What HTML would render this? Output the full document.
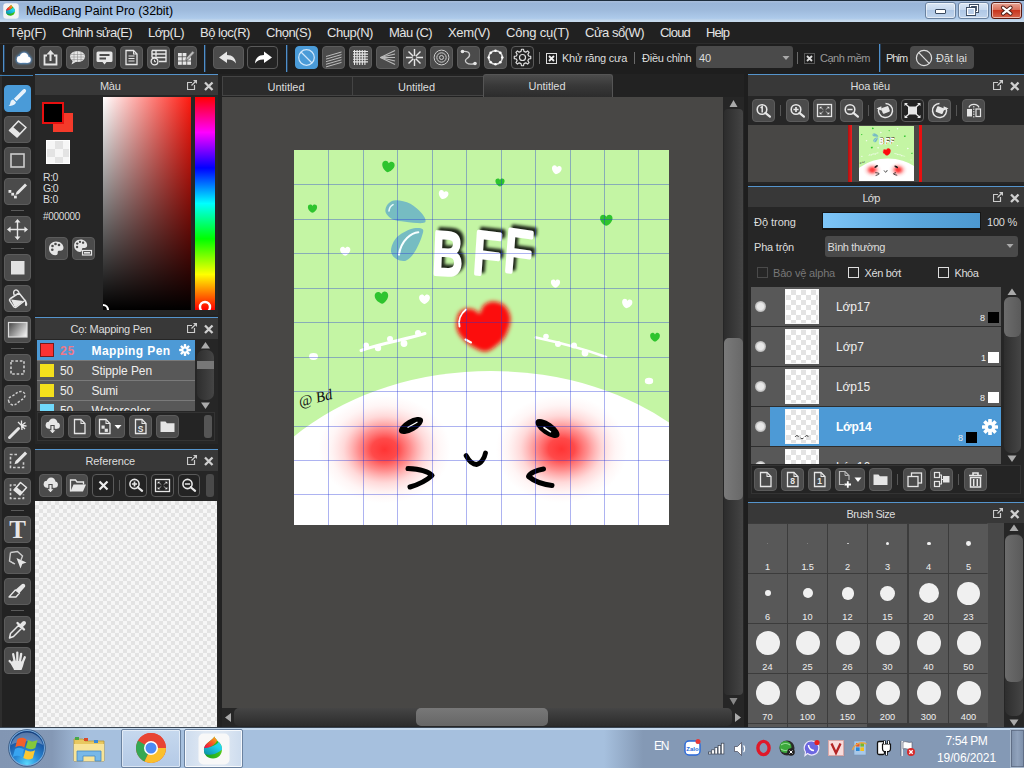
<!DOCTYPE html><html><head><meta charset="utf-8"><title>MediBang Paint Pro</title><style>
*{box-sizing:border-box;margin:0;padding:0}
html,body{width:1024px;height:768px;overflow:hidden;background:#222;}
body{position:relative;font-family:"Liberation Sans","DejaVu Sans",sans-serif;font-size:11px;color:#ddd;}
div,span,svg{position:absolute}
.tx{white-space:nowrap;display:block}
#title{left:0;top:0;width:1024px;height:22px;background:linear-gradient(#a9bedb 0,#99b5d8 12%,#9db9db 40%,#adcaea 82%,#c4d8ec 93%,#c8dbee 100%);border-top:1px solid #1c2c3c}
#menu{left:0;top:22px;width:1024px;height:21px;background:#212121}
#tb{left:0;top:43px;width:1024px;height:31px;background:#222}
.btn{background:#4b4b4b;border:1px solid #5c5c5c;border-radius:4px;overflow:hidden}
.btn.dk{background:#232323;border-color:#5a5a5a}
.btn.sel{background:#4a9bd8;border-color:#4a9bd8}
.vsep{width:1px;background:#4f8fca;box-shadow:1px 0 0 #27405a}
.gsep{width:1px;background:#6a6a6a}
.panel{background:#262626}
.ptitle{left:0;top:0;right:0;height:22px;background:#383838;border-top:1px solid #5594cc}
.chk{background-color:#f6f6f6;background-image:linear-gradient(45deg,#e3e3e3 25%,transparent 25%,transparent 75%,#e3e3e3 75%),linear-gradient(45deg,#e3e3e3 25%,transparent 25%,transparent 75%,#e3e3e3 75%);background-size:8px 8px;background-position:0 0,4px 4px}
.cb{width:11px;height:11px;border:1px solid #ddd}
.sbt{background:linear-gradient(90deg,#2e2e2e,#454545);border-radius:5px}
.sbh{background:linear-gradient(90deg,#6c6c6c,#5a5a5a);border-radius:5px}
</style></head><body>
<div id="title">
<svg width="16" height="16" viewBox="0 0 32 32" style="left:2.5px;top:1.5px"><rect x="0.5" y="0.5" width="31" height="31" rx="6" fill="#f4f4f4"/><defs><clipPath id="tic"><path d="M16.500 3.500C17 6.500 21.500 8.500 23.300 12.500C25.500 18 22.500 25.500 15 25.500C8 25.500 4.800 19.500 6.300 14.500C7.800 9.500 14 7.500 16.500 3.500z"/></clipPath><linearGradient id="tig" x1="0" y1="0" x2="1" y2="0"><stop offset="0.2" stop-color="#14a020"/><stop offset="0.65" stop-color="#3cc01c"/><stop offset="1" stop-color="#c8ec20"/></linearGradient><linearGradient id="tib" x1="0" y1="1" x2="1" y2="0"><stop offset="0.1" stop-color="#0c90a8"/><stop offset="0.6" stop-color="#20d0ec"/><stop offset="1" stop-color="#30e0f0"/></linearGradient><linearGradient id="tir" x1="0" y1="1" x2="1" y2="0"><stop offset="0.15" stop-color="#f00c48"/><stop offset="0.55" stop-color="#f86020"/><stop offset="0.9" stop-color="#fcb020"/></linearGradient></defs><g clip-path="url(#tic)"><rect width="32" height="32" fill="url(#tig)"/><path d="M3 13C10 16 19 13 22 7L27 11C26 16 24 17 21.500 18.500C17 21.500 10 23.500 4 20z" fill="url(#tib)"/><path d="M3 14.500C10 16.500 17.500 12.500 19.500 6.500L17 2L3 6z" fill="url(#tir)"/></g></svg>
<span class="tx" style="left:26px;top:4.10px;font-size:12.4px;line-height:12.4px;color:#000;font-weight:normal;letter-spacing:-0.07px;">MediBang Paint Pro (32bit)</span>
<div style="left:925px;top:1px;width:31px;height:17px;border:1px solid #6a82a0;border-radius:3px;background:linear-gradient(#dbe7f5 0%,#c6d8ee 45%,#b0c8e6 50%,#c0d4ec 100%);box-shadow:inset 0 0 0 1px rgba(255,255,255,.55)"></div>
<div style="left:958px;top:1px;width:31px;height:17px;border:1px solid #6a82a0;border-radius:3px;background:linear-gradient(#dbe7f5 0%,#c6d8ee 45%,#b0c8e6 50%,#c0d4ec 100%);box-shadow:inset 0 0 0 1px rgba(255,255,255,.55)"></div>
<div style="left:991px;top:1px;width:31px;height:17px;border:1px solid #5a1a12;border-radius:3px;background:linear-gradient(#e9a595 0%,#d8705c 45%,#c8351f 50%,#d6654e 100%);box-shadow:inset 0 0 0 1px rgba(255,255,255,.55)"></div>
<svg width="1024" height="22" viewBox="0 0 1024 22" style="position:absolute;left:0;top:0;top:-1px"><rect x="935.5" y="9.5" width="10" height="4" rx="0.5" fill="#fff" stroke="#3a4a60" stroke-width="1"/><path d="M970.5 5.500h7v6h-7z" fill="none" stroke="#3a4a60" stroke-width="3"/><path d="M970.5 5.5h7v6h-7z" fill="none" stroke="#fff" stroke-width="1.2"/><path d="M967.5 8.5h7v6h-7z" fill="#b8cde8" stroke="#3a4a60" stroke-width="3"/><path d="M967.5 8.5h7v6h-7z" fill="#b8cde8" stroke="#fff" stroke-width="1.2"/><path d="M1003 7.6l7.6 6M1010.6 7.6l-7.6 6" stroke="#4a1a14" stroke-width="4" stroke-linecap="round"/><path d="M1003 7.6l7.6 6M1010.6 7.6l-7.6 6" stroke="#fff" stroke-width="2.2" stroke-linecap="round"/></svg>
</div>
<div id="menu">
<span class="tx" style="left:9px;top:4.40px;font-size:13px;line-height:13px;color:#e4e4e4;font-weight:normal;letter-spacing:-0.33px;">Tệp(F)</span>
<span class="tx" style="left:62px;top:4.40px;font-size:13px;line-height:13px;color:#e4e4e4;font-weight:normal;letter-spacing:-0.61px;">Chỉnh sửa(E)</span>
<span class="tx" style="left:148px;top:4.40px;font-size:13px;line-height:13px;color:#e4e4e4;font-weight:normal;letter-spacing:-0.48px;">Lớp(L)</span>
<span class="tx" style="left:200px;top:4.40px;font-size:13px;line-height:13px;color:#e4e4e4;font-weight:normal;letter-spacing:-0.47px;">Bộ lọc(R)</span>
<span class="tx" style="left:266px;top:4.40px;font-size:13px;line-height:13px;color:#e4e4e4;font-weight:normal;letter-spacing:-0.49px;">Chọn(S)</span>
<span class="tx" style="left:327px;top:4.40px;font-size:13px;line-height:13px;color:#e4e4e4;font-weight:normal;letter-spacing:-0.45px;">Chụp(N)</span>
<span class="tx" style="left:389px;top:4.40px;font-size:13px;line-height:13px;color:#e4e4e4;font-weight:normal;letter-spacing:-0.56px;">Màu (C)</span>
<span class="tx" style="left:448px;top:4.40px;font-size:13px;line-height:13px;color:#e4e4e4;font-weight:normal;letter-spacing:-0.34px;">Xem(V)</span>
<span class="tx" style="left:506px;top:4.40px;font-size:13px;line-height:13px;color:#e4e4e4;font-weight:normal;letter-spacing:-0.20px;">Công cụ(T)</span>
<span class="tx" style="left:585px;top:4.40px;font-size:13px;line-height:13px;color:#e4e4e4;font-weight:normal;letter-spacing:-0.51px;">Cửa sổ(W)</span>
<span class="tx" style="left:660px;top:4.40px;font-size:13px;line-height:13px;color:#e4e4e4;font-weight:normal;letter-spacing:-0.79px;">Cloud</span>
<span class="tx" style="left:706px;top:4.40px;font-size:13px;line-height:13px;color:#e4e4e4;font-weight:normal;letter-spacing:-0.94px;">Help</span>
</div>
<div id="tb" style="background:#1e1e1e;border-top:1px solid #2c2c2c">
<div class="vsep" style="left:3px;top:1px;height:27px"></div>
<div class="vsep" style="left:204px;top:1px;height:27px"></div>
<div class="vsep" style="left:286px;top:1px;height:27px"></div>
<div class="vsep" style="left:879px;top:0px;height:28px"></div>
<div class="btn " style="left:12px;top:2px;width:23px;height:23px"><svg width="23" height="23" viewBox="0 0 23 23" style="position:absolute;left:0;top:0;left:-1px;top:-1px;"><g filter="url(#glow)"><g transform="translate(11.5,12.5) scale(0.92)" fill="#fff"><circle cx="-3.6" cy="1" r="3.6"/><circle cx="0.6" cy="-1.6" r="4.6"/><circle cx="4.6" cy="1.4" r="3.2"/><rect x="-3.6" y="0.6" width="8.2" height="4"/></g></g><defs><filter id="glow" x="-30%" y="-30%" width="160%" height="160%"><feGaussianBlur stdDeviation="1.4" result="b"/><feFlood flood-color="#5aa8f0"/><feComposite in2="b" operator="in"/><feMerge><feMergeNode/><feMergeNode/><feMergeNode in="SourceGraphic"/></feMerge></filter></defs></svg></div>
<div class="btn " style="left:39px;top:2px;width:23px;height:23px"><svg width="23" height="23" viewBox="0 0 23 23" style="position:absolute;left:0;top:0;left:-1px;top:-1px;"><path d="M8 9.500h-2.5v9h12v-9h-2.500" fill="none" stroke="#e6e6e6" stroke-width="1.8"/><path d="M11.5 15v-9" stroke="#e6e6e6" stroke-width="2"/><path d="M7.5 8.500l4-4.500l4 4.500z" fill="#e6e6e6"/></svg></div>
<div class="btn " style="left:66px;top:2px;width:23px;height:23px"><svg width="23" height="23" viewBox="0 0 23 23" style="position:absolute;left:0;top:0;left:-1px;top:-1px;"><ellipse cx="11.5" cy="10.5" rx="7.5" ry="5.6" fill="#e6e6e6"/><path d="M7 14l-1.500 4.500l5-3z" fill="#e6e6e6"/><path d="M5 8.500h13M4.500 11h14M5.500 13.500h12M8 5.500v10M11.500 5v11M15 5.500v10" stroke="#8a8a8a" stroke-width="0.55"/></svg></div>
<div class="btn " style="left:93px;top:2px;width:23px;height:23px"><svg width="23" height="23" viewBox="0 0 23 23" style="position:absolute;left:0;top:0;left:-1px;top:-1px;"><path d="M5 5.500h13a1.500 1.500 0 0 1 1.500 1.500v7.500a1.500 1.500 0 0 1 -1.500 1.500h-4.500l-2 2.500l-2 -2.500h-4.500a1.500 1.500 0 0 1 -1.500 -1.500v-7.500a1.500 1.500 0 0 1 1.500 -1.500z" fill="#e6e6e6"/><path d="M6.500 9h10M6.500 12.500h6.500" stroke="#4b4b4b" stroke-width="1.8"/></svg></div>
<div class="btn " style="left:120px;top:2px;width:23px;height:23px"><svg width="23" height="23" viewBox="0 0 23 23" style="position:absolute;left:0;top:0;left:-1px;top:-1px;"><path d="M6 4.5h7.5l3.5 3.5v10.5h-11z" fill="none" stroke="#e6e6e6" stroke-width="1.3" stroke-linejoin="miter"/><path d="M13.5 4.5v3.5h3.5" fill="none" stroke="#e6e6e6" stroke-width="1.04"/><path d="M8.500 10h6M8.500 12.500h6M8.500 15h6" stroke="#e6e6e6" stroke-width="1.2"/></svg></div>
<div class="btn " style="left:147px;top:2px;width:23px;height:23px"><svg width="23" height="23" viewBox="0 0 23 23" style="position:absolute;left:0;top:0;left:-1px;top:-1px;"><path d="M5 4.500h14v11h-7M5 4.500v7M5 8h14M5 11.500h14M9 4.500v6" fill="none" stroke="#e6e6e6" stroke-width="1.4"/><circle cx="7.500" cy="15.500" r="3.400" fill="#4b4b4b" stroke="#e6e6e6" stroke-width="1.300"/><path d="M7.500 13.800v1.900h1.500" fill="none" stroke="#e6e6e6" stroke-width="1"/></svg></div>
<div class="btn " style="left:174px;top:2px;width:23px;height:23px"><svg width="23" height="23" viewBox="0 0 23 23" style="position:absolute;left:0;top:0;left:-1px;top:-1px;"><rect x="4.0" y="7.0" width="3.8" height="3.4" fill="#e6e6e6"/><rect x="4.0" y="11.2" width="3.8" height="3.4" fill="#e6e6e6"/><rect x="4.0" y="15.4" width="3.8" height="3.4" fill="#e6e6e6"/><rect x="8.6" y="7.0" width="3.8" height="3.4" fill="#e6e6e6"/><rect x="8.6" y="11.2" width="3.8" height="3.4" fill="#e6e6e6"/><rect x="8.6" y="15.4" width="3.8" height="3.4" fill="#e6e6e6"/><rect x="13.2" y="11.2" width="3.8" height="3.4" fill="#e6e6e6"/><rect x="13.2" y="15.4" width="3.8" height="3.4" fill="#e6e6e6"/><path d="M12.500 11.500l6-6.500l2 1.800l-6 6.500l-2.800 1z" fill="#bbb" stroke="#4b4b4b" stroke-width="0.6"/></svg></div>
<div class="btn " style="left:213px;top:2px;width:31px;height:23px"><svg width="31" height="23" viewBox="0 0 31 23" style="position:absolute;left:0;top:0;left:-1px;top:-1px;"><path d="M6 11.500l8-6v3.500c5.500 0 8.500 3 9 8.500c-2-3.200-4.500-4.300-9-4.100v3.600z" fill="#e6e6e6"/></svg></div>
<div class="btn dk" style="left:247px;top:2px;width:31px;height:23px"><svg width="31" height="23" viewBox="0 0 31 23" style="position:absolute;left:0;top:0;left:-1px;top:-1px;"><path d="M25 11.500l-8-6v3.500c-5.500 0-8.500 3-9 8.500c2-3.200 4.500-4.300 9-4.100v3.600z" fill="#fff"/></svg></div>
<div class="btn sel" style="left:295px;top:2px;width:23px;height:23px"><svg width="23" height="23" viewBox="0 0 23 23" style="position:absolute;left:0;top:0;left:-1px;top:-1px;"><circle cx="11.500" cy="11.500" r="7.800" fill="none" stroke="#cfe6fa" stroke-width="1.200"/><path d="M6 6l11 11" stroke="#cfe6fa" stroke-width="1.200"/></svg></div>
<div class="btn " style="left:322px;top:2px;width:23px;height:23px"><svg width="23" height="23" viewBox="0 0 23 23" style="position:absolute;left:0;top:0;left:-1px;top:-1px;"><path d="M4 10.5l15.500 -4.500" stroke="#bbb" stroke-width="1"/><path d="M4 13.1l15.500 -4.500" stroke="#bbb" stroke-width="1"/><path d="M4 15.7l15.500 -4.500" stroke="#bbb" stroke-width="1"/><path d="M4 18.3l15.500 -4.500" stroke="#bbb" stroke-width="1"/><path d="M4 20.9l15.500 -4.500" stroke="#bbb" stroke-width="1"/></svg></div>
<div class="btn " style="left:349px;top:2px;width:23px;height:23px"><svg width="23" height="23" viewBox="0 0 23 23" style="position:absolute;left:0;top:0;left:-1px;top:-1px;"><path d="M5.5 4v15M4 5.5h15" stroke="#e6e6e6" stroke-width="1.100"/><path d="M8.1 4v15M4 8.1h15" stroke="#e6e6e6" stroke-width="1.100"/><path d="M10.7 4v15M4 10.7h15" stroke="#e6e6e6" stroke-width="1.100"/><path d="M13.3 4v15M4 13.3h15" stroke="#e6e6e6" stroke-width="1.100"/><path d="M15.9 4v15M4 15.9h15" stroke="#e6e6e6" stroke-width="1.100"/></svg></div>
<div class="btn " style="left:376px;top:2px;width:23px;height:23px"><svg width="23" height="23" viewBox="0 0 23 23" style="position:absolute;left:0;top:0;left:-1px;top:-1px;"><path d="M4.500 11.500L19 4.5" stroke="#bbb" stroke-width="1.100"/><path d="M4.500 11.500L19 8.0" stroke="#bbb" stroke-width="1.100"/><path d="M4.500 11.500L19 11.5" stroke="#bbb" stroke-width="1.100"/><path d="M4.500 11.500L19 15.0" stroke="#bbb" stroke-width="1.100"/><path d="M4.500 11.500L19 18.5" stroke="#bbb" stroke-width="1.100"/></svg></div>
<div class="btn " style="left:403px;top:2px;width:23px;height:23px"><svg width="23" height="23" viewBox="0 0 23 23" style="position:absolute;left:0;top:0;left:-1px;top:-1px;"><path d="M11.500 11.500l0 -8.500" transform="rotate(0 11.500 11.500)" stroke="#e6e6e6" stroke-width="1.400"/><path d="M11.500 11.500l0 -8.500" transform="rotate(45 11.500 11.500)" stroke="#e6e6e6" stroke-width="1.400"/><path d="M11.500 11.500l0 -8.500" transform="rotate(90 11.500 11.500)" stroke="#e6e6e6" stroke-width="1.400"/><path d="M11.500 11.500l0 -8.500" transform="rotate(135 11.500 11.500)" stroke="#e6e6e6" stroke-width="1.400"/><path d="M11.500 11.500l0 -8.500" transform="rotate(180 11.500 11.500)" stroke="#e6e6e6" stroke-width="1.400"/><path d="M11.500 11.500l0 -8.500" transform="rotate(225 11.500 11.500)" stroke="#e6e6e6" stroke-width="1.400"/><path d="M11.500 11.500l0 -8.500" transform="rotate(270 11.500 11.500)" stroke="#e6e6e6" stroke-width="1.400"/><path d="M11.500 11.500l0 -8.500" transform="rotate(315 11.500 11.500)" stroke="#e6e6e6" stroke-width="1.400"/><circle cx="11.500" cy="11.500" r="1.800" fill="#4b4b4b"/></svg></div>
<div class="btn " style="left:430px;top:2px;width:23px;height:23px"><svg width="23" height="23" viewBox="0 0 23 23" style="position:absolute;left:0;top:0;left:-1px;top:-1px;"><circle cx="11.500" cy="11.500" r="2" fill="none" stroke="#ccc" stroke-width="1"/><circle cx="11.500" cy="11.500" r="4.7" fill="none" stroke="#ccc" stroke-width="1"/><circle cx="11.500" cy="11.500" r="7.4" fill="none" stroke="#ccc" stroke-width="1"/></svg></div>
<div class="btn " style="left:457px;top:2px;width:23px;height:23px"><svg width="23" height="23" viewBox="0 0 23 23" style="position:absolute;left:0;top:0;left:-1px;top:-1px;"><path d="M5.500 5.500c9 -1 8 5 4.500 7c-4 2.500 0 7 8 5" fill="none" stroke="#ccc" stroke-width="1.300"/><circle cx="5.500" cy="5.500" r="1.800" fill="#e6e6e6"/><circle cx="18" cy="17.500" r="1.800" fill="#e6e6e6"/></svg></div>
<div class="btn " style="left:484px;top:2px;width:23px;height:23px"><svg width="23" height="23" viewBox="0 0 23 23" style="position:absolute;left:0;top:0;left:-1px;top:-1px;"><circle cx="11.500" cy="11.500" r="6.800" fill="none" stroke="#ddd" stroke-width="1.600"/><circle cx="18.30" cy="11.50" r="1.300" fill="#fff"/><circle cx="16.31" cy="16.31" r="1.300" fill="#fff"/><circle cx="11.50" cy="18.30" r="1.300" fill="#fff"/><circle cx="6.69" cy="16.31" r="1.300" fill="#fff"/><circle cx="4.70" cy="11.50" r="1.300" fill="#fff"/><circle cx="6.69" cy="6.69" r="1.300" fill="#fff"/><circle cx="11.50" cy="4.70" r="1.300" fill="#fff"/><circle cx="16.31" cy="6.69" r="1.300" fill="#fff"/></svg></div>
<div class="btn dk" style="left:511px;top:2px;width:23px;height:23px"><svg width="23" height="23" viewBox="0 0 23 23" style="position:absolute;left:0;top:0;left:-1px;top:-1px;"><path d="M17.63 10.03L19.73 10.46L19.73 12.54L17.63 12.97L16.87 14.79L18.06 16.59L16.59 18.06L14.79 16.87L12.97 17.63L12.54 19.73L10.46 19.73L10.03 17.63L8.21 16.87L6.41 18.06L4.94 16.59L6.13 14.79L5.37 12.97L3.27 12.54L3.27 10.46L5.37 10.03L6.13 8.21L4.94 6.41L6.41 4.94L8.21 6.13L10.03 5.37L10.46 3.27L12.54 3.27L12.97 5.37L14.79 6.13L16.59 4.94L18.06 6.41L16.87 8.21z" fill="none" stroke="#ddd" stroke-width="1.2" stroke-linejoin="round"/><circle cx="11.5" cy="11.5" r="3.024" fill="none" stroke="#ddd" stroke-width="1.2"/></svg></div>
<div class="gsep" style="left:539px;top:8px;height:12px"></div>
<div class="cb" style="left:546px;top:9px;border-color:#ddd"></div><svg width="11" height="11" viewBox="0 0 11 11" style="position:absolute;left:0;top:0;left:546px;top:9px"><path d="M3 3l5 5M8 3l-5 5" stroke="#eee" stroke-width="1.800"/></svg>
<span class="tx" style="left:562px;top:8.99px;font-size:11px;line-height:11px;color:#ddd;font-weight:normal;letter-spacing:-0.24px;">Khử răng cưa</span>
<div class="gsep" style="left:634px;top:8px;height:12px"></div>
<span class="tx" style="left:642px;top:8.99px;font-size:11px;line-height:11px;color:#ddd;font-weight:normal;letter-spacing:-0.25px;">Điều chỉnh</span>
<div style="left:696px;top:2px;width:97px;height:22px;background:#4a4a4a;border-radius:3px"></div>
<span class="tx" style="left:699px;top:8.99px;font-size:11px;line-height:11px;color:#ddd;font-weight:normal;letter-spacing:-0.12px;">40</span>
<svg width="8" height="5" viewBox="0 0 8 5" style="position:absolute;left:0;top:0;left:782px;top:11.5px"><path d="M0.5 0h7l-3.5 4z" fill="#aaa"/></svg>
<div class="gsep" style="left:797px;top:8px;height:12px"></div>
<div class="cb" style="left:804px;top:9px;border-color:#555"></div><svg width="11" height="11" viewBox="0 0 11 11" style="position:absolute;left:0;top:0;left:804px;top:9px"><path d="M3 3l5 5M8 3l-5 5" stroke="#ddd" stroke-width="1.800"/></svg>
<span class="tx" style="left:820px;top:8.99px;font-size:11px;line-height:11px;color:#999;font-weight:normal;letter-spacing:-0.47px;">Cạnh mềm</span>
<span class="tx" style="left:886px;top:8.99px;font-size:11px;line-height:11px;color:#ddd;font-weight:normal;letter-spacing:-1.17px;">Phím</span>
<div style="left:910px;top:2px;width:64px;height:23px;background:#4a4a4a;border-radius:4px"></div>
<svg width="20" height="20" viewBox="0 0 20 20" style="position:absolute;left:0;top:0;left:914px;top:3.500px"><circle cx="10" cy="10" r="7.600" fill="none" stroke="#ddd" stroke-width="1.200"/><path d="M4.800 4.600l10.400 10.800" stroke="#ddd" stroke-width="1.200"/></svg>
<span class="tx" style="left:936px;top:8.99px;font-size:11px;line-height:11px;color:#ddd;font-weight:normal;letter-spacing:-0.03px;">Đặt lại</span>
</div>
<div style="left:0;top:74px;width:34px;height:654px;background:#222"></div>
<div style="left:0;top:74px;width:2px;height:654px;background:#2e2e2e"></div>
<div style="left:0;top:75px;width:33px;height:1px;background:#3d7fb5"></div>
<div class="btn sel" style="left:4px;top:85px;width:27px;height:27px"><svg width="27" height="27" viewBox="0 0 27 27" style="position:absolute;left:0;top:0;left:-1px;top:-1px;"><path d="M21.500 4.500c1.200 1 .5 2.200-.4 3.200l-8.600 8.600l-2.600-2.600l8.600-8.600c1-1 2-1.400 3-.6z" fill="#e8f2fa"/><path d="M9.200 14.500l2.800 2.800c-.5 2.500-3.500 4-7.500 3.500c1.800-.8 1.500-2.200 2-3.800c.4-1.300 1.500-2.300 2.700-2.500z" fill="#e8f2fa"/></svg></div>
<div class="btn " style="left:4px;top:116px;width:27px;height:27px"><svg width="27" height="27" viewBox="0 0 27 27" style="position:absolute;left:0;top:0;left:-1px;top:-1px;"><path d="M14.500 5l7.500 6.500l-9 9.500l-7.500-6.500z" fill="none" stroke="#e6e6e6" stroke-width="1.600" stroke-linejoin="round"/><path d="M9 11l7.500 6.500l-3.500 3.500l-7.500-6.500z" fill="#e6e6e6"/></svg></div>
<div class="btn " style="left:4px;top:147px;width:27px;height:27px"><svg width="27" height="27" viewBox="0 0 27 27" style="position:absolute;left:0;top:0;left:-1px;top:-1px;"><rect x="7" y="7" width="13" height="13" fill="none" stroke="#ccc" stroke-width="1.600"/></svg></div>
<div class="btn " style="left:4px;top:178px;width:27px;height:27px"><svg width="27" height="27" viewBox="0 0 27 27" style="position:absolute;left:0;top:0;left:-1px;top:-1px;"><path d="M21 5.500l2 2l-8.500 8.500l-3 1l1-3z" fill="#e6e6e6"/><rect x="4.500" y="12" width="2.800" height="2.800" fill="#e6e6e6"/><rect x="7.300" y="14.800" width="2.800" height="2.800" fill="#e6e6e6"/><rect x="10" y="17.600" width="2.800" height="2.800" fill="#e6e6e6"/></svg></div>
<div style="left:11px;top:210px;width:13px;height:1px;background:#5a5a5a"></div>
<div class="btn " style="left:4px;top:216px;width:27px;height:27px"><svg width="27" height="27" viewBox="0 0 27 27" style="position:absolute;left:0;top:0;left:-1px;top:-1px;"><path d="M13.500 5v17M5 13.500h17" stroke="#e6e6e6" stroke-width="1.400"/><path d="M13.500 3l3 3.600h-6zM13.500 24l3-3.600h-6zM3 13.500l3.600-3v6zM24 13.500l-3.600-3v6z" fill="#e6e6e6"/></svg></div>
<div style="left:11px;top:248px;width:13px;height:1px;background:#5a5a5a"></div>
<div class="btn " style="left:4px;top:254px;width:27px;height:27px"><svg width="27" height="27" viewBox="0 0 27 27" style="position:absolute;left:0;top:0;left:-1px;top:-1px;"><rect x="7" y="7" width="13.500" height="13.500" fill="#e2e2e2"/></svg></div>
<div class="btn " style="left:4px;top:285px;width:27px;height:27px"><svg width="27" height="27" viewBox="0 0 27 27" style="position:absolute;left:0;top:0;left:-1px;top:-1px;"><path d="M6.500 13.500l8.500-5.500l6 7.500l-8.500 6.500a2 2 0 0 1 -2.800 -.4l-3.600-5.300a2 2 0 0 1 .4-2.800z" fill="none" stroke="#e6e6e6" stroke-width="1.500" stroke-linejoin="round"/><path d="M7 14.500l12.500 1.500l-7 5.500a1.500 1.500 0 0 1 -2.200-.3z" fill="#e6e6e6"/><path d="M10.500 10.500c-2.500-5 2-8 4.500-3" fill="none" stroke="#e6e6e6" stroke-width="1.400"/><path d="M21 14.500c1.500 1.200 2.500 3.500 2.200 5.500c-.3 1.500-2 1.500-2.200 0z" fill="#e6e6e6"/></svg></div>
<div class="btn " style="left:4px;top:316px;width:27px;height:27px"><svg width="27" height="27" viewBox="0 0 27 27" style="position:absolute;left:0;top:0;left:-1px;top:-1px;"><defs><linearGradient id="tg" x1="0" y1="0.200" x2="1" y2="0.800"><stop offset="0" stop-color="#505050"/><stop offset="1" stop-color="#f0f0f0"/></linearGradient></defs><rect x="4.500" y="6.500" width="18.500" height="14.500" fill="url(#tg)" stroke="#ddd" stroke-width="1.200"/></svg></div>
<div style="left:11px;top:348px;width:13px;height:1px;background:#5a5a5a"></div>
<div class="btn " style="left:4px;top:354px;width:27px;height:27px"><svg width="27" height="27" viewBox="0 0 27 27" style="position:absolute;left:0;top:0;left:-1px;top:-1px;"><rect x="7" y="7" width="13" height="13" fill="none" stroke="#ccc" stroke-width="1.600" stroke-dasharray="2.600 1.800"/></svg></div>
<div class="btn " style="left:4px;top:385px;width:27px;height:27px"><svg width="27" height="27" viewBox="0 0 27 27" style="position:absolute;left:0;top:0;left:-1px;top:-1px;"><path d="M5 17c-1.500-3 .5-5 3-6c3-1.200 4.500-3.500 7.500-4.300c3-.8 6 1.200 5.500 4c-.5 3-3.500 4-6 6c-2.500 2-4 4-7 3c-1.500-.5-2.500-1.500-3-2.700z" fill="none" stroke="#ccc" stroke-width="1.500" stroke-dasharray="2.400 1.600"/></svg></div>
<div class="btn " style="left:4px;top:416px;width:27px;height:27px"><svg width="27" height="27" viewBox="0 0 27 27" style="position:absolute;left:0;top:0;left:-1px;top:-1px;"><path d="M5.500 21.500l9-9" stroke="#e6e6e6" stroke-width="3" stroke-linecap="round"/><path d="M17.500 9.500l0-5M17.500 9.500l4-3M17.500 9.500l5 .5M17.500 9.500l3.500 3.500M17.500 9.500l-3.500-3.500M17.500 9.500l.5 4.500" stroke="#e6e6e6" stroke-width="1.300"/></svg></div>
<div class="btn " style="left:4px;top:447px;width:27px;height:27px"><svg width="27" height="27" viewBox="0 0 27 27" style="position:absolute;left:0;top:0;left:-1px;top:-1px;"><path d="M13 7.500h-6.500v13h13v-6.500" fill="none" stroke="#ccc" stroke-width="1.600" stroke-dasharray="2.600 1.800"/><path d="M21 4.500l2.200 2.200l-9.500 9.500l-3.200 1l1-3.200z" fill="#e6e6e6"/></svg></div>
<div class="btn " style="left:4px;top:478px;width:27px;height:27px"><svg width="27" height="27" viewBox="0 0 27 27" style="position:absolute;left:0;top:0;left:-1px;top:-1px;"><path d="M12 7h-5.500v13.500h13v-4" fill="none" stroke="#ccc" stroke-width="1.600" stroke-dasharray="2.600 1.800"/><path d="M16.500 4.500l6 5l-6.500 7.500l-6-5z" fill="none" stroke="#e6e6e6" stroke-width="1.500" stroke-linejoin="round"/><path d="M12.500 9l6 5l-2.500 3l-6-5z" fill="#e6e6e6"/></svg></div>
<div style="left:11px;top:510px;width:13px;height:1px;background:#5a5a5a"></div>
<div class="btn " style="left:4px;top:516px;width:27px;height:27px"><svg width="27" height="27" viewBox="0 0 27 27" style="position:absolute;left:0;top:0;left:-1px;top:-1px;"></svg></div>
<div class="btn " style="left:4px;top:547px;width:27px;height:27px"><svg width="27" height="27" viewBox="0 0 27 27" style="position:absolute;left:0;top:0;left:-1px;top:-1px;"><path d="M6.500 5.500l7-1l5 4.500l-1.500 4M11 17l-5.500-3z" fill="none" stroke="#ccc" stroke-width="1.400"/><path d="M6.500 5.500l-1 8.500l5 3" fill="none" stroke="#ccc" stroke-width="1.400"/><path d="M12.500 11l10 4.500l-4.200 1.500l-1.800 4.500z" fill="#e6e6e6"/></svg></div>
<div class="btn " style="left:4px;top:578px;width:27px;height:27px"><svg width="27" height="27" viewBox="0 0 27 27" style="position:absolute;left:0;top:0;left:-1px;top:-1px;"><path d="M17.500 6.500c1.500-1.800 4.500-.2 3.600 2.200l-5.600 6.200l-4.200-3z" fill="#e6e6e6"/><path d="M11.300 12l4.200 3l-3.500 4h-7z" fill="none" stroke="#e6e6e6" stroke-width="1.300" stroke-linejoin="round"/></svg></div>
<div style="left:11px;top:610px;width:13px;height:1px;background:#5a5a5a"></div>
<div class="btn " style="left:4px;top:616px;width:27px;height:27px"><svg width="27" height="27" viewBox="0 0 27 27" style="position:absolute;left:0;top:0;left:-1px;top:-1px;"><path d="M6.500 17.500l8.500-8.500l3 3l-8.500 8.500l-4 1.500z" fill="none" stroke="#e6e6e6" stroke-width="1.500" stroke-linejoin="round"/><path d="M13.500 7l6.500 6.500" stroke="#e6e6e6" stroke-width="2.400" stroke-linecap="round"/><path d="M17 10l3-3" stroke="#e6e6e6" stroke-width="4" stroke-linecap="round"/></svg></div>
<div class="btn " style="left:4px;top:647px;width:27px;height:27px"><svg width="27" height="27" viewBox="0 0 27 27" style="position:absolute;left:0;top:0;left:-1px;top:-1px;"><path d="M10.600 14L9.200 7.200M13.300 13.500L13.300 5.600M16 14L17.200 6.800M18.600 15.500L20.800 10.200M9.500 18L5.600 14" stroke="#e6e6e6" stroke-width="2.300" stroke-linecap="round" fill="none"/><path d="M8.700 13.500L19.800 14.500C19.800 18 18.500 20 17.500 23L10 23C9.500 21 8 19.500 7 17z" fill="#e6e6e6"/></svg></div>
<span class="tx" style="left:8px;top:516px;width:19px;text-align:center;font-family:'Liberation Serif',serif;font-weight:bold;font-size:25px;line-height:27px;color:#e6e6e6">T</span>
<div class="panel" style="left:35px;top:74px;width:183px;height:241px"></div>
<div class="ptitle" style="left:35px;top:74px;width:183px;height:21px"></div><span class="tx" style="left:100px;top:80.89px;font-size:11px;line-height:11px;color:#ddd;font-weight:normal;letter-spacing:-0.30px;">Màu</span><svg width="30" height="12" viewBox="0 0 30 12" style="position:absolute;left:0;top:0;left:187px;top:80px"><path d="M5 2.5h-4.5v7h7v-4.5" fill="none" stroke="#ccc" stroke-width="1.2"/><path d="M4.5 5.5l5 -5" stroke="#ccc" stroke-width="1.2"/><path d="M6 0h4v4z" fill="#ccc"/><path d="M18 2.5l7.5 7.5M25.5 2.5l-7.5 7.5" stroke="#cfcfcf" stroke-width="2.3" stroke-linecap="butt"/></svg>
<div style="left:53px;top:113px;width:20px;height:19px;background:#f43a2a"></div>
<div style="left:42px;top:102px;width:22px;height:22px;background:#000;border:2px solid #e81010"></div>
<div class="chk" style="left:46px;top:140px;width:24px;height:24px;background-size:16px 16px;background-position:0 0,8px 8px;border:1px solid #fff"></div>
<span class="tx" style="left:43px;top:171.51px;font-size:10.5px;line-height:10.5px;color:#ddd;font-weight:normal;letter-spacing:-0.45px;">R:0</span>
<span class="tx" style="left:43px;top:182.51px;font-size:10.5px;line-height:10.5px;color:#ddd;font-weight:normal;letter-spacing:-0.65px;">G:0</span>
<span class="tx" style="left:43px;top:193.51px;font-size:10.5px;line-height:10.5px;color:#ddd;font-weight:normal;letter-spacing:-0.26px;">B:0</span>
<span class="tx" style="left:43px;top:211.94px;font-size:10px;line-height:10px;color:#ddd;font-weight:normal;letter-spacing:-0.28px;">#000000</span>
<div class="btn " style="left:45px;top:237px;width:23px;height:23px"><svg width="23" height="23" viewBox="0 0 23 23" style="position:absolute;left:0;top:0;left:-1px;top:-1px;"><path d="M11 4.500c4.500 0 7.500 3 7.500 6.300c0 2.200-1.500 3.200-3.500 3c-1.500-.2-2.500.3-2.300 1.700c.2 1.500-.5 2.700-2.200 2.700c-3.500 0-6.500-3-6.500-6.800c0-3.800 3-6.900 7-6.900z" fill="#e6e6e6"/><circle cx="7.500" cy="9" r="1.300" fill="#4b4b4b"/><circle cx="10.500" cy="7" r="1.300" fill="#4b4b4b"/><circle cx="14" cy="8" r="1.300" fill="#4b4b4b"/><circle cx="7.300" cy="12.800" r="1.300" fill="#4b4b4b"/></svg></div>
<div class="btn " style="left:72px;top:237px;width:23px;height:23px"><svg width="23" height="23" viewBox="0 0 23 23" style="position:absolute;left:0;top:0;left:-1px;top:-1px;"><g transform="translate(-1.500,-1.500) scale(0.9)"><path d="M11 4.500c4.500 0 7.500 3 7.500 6.300c0 2.200-1.500 3.200-3.500 3c-1.500-.2-2.500.3-2.300 1.700c.2 1.500-.5 2.700-2.200 2.700c-3.500 0-6.500-3-6.500-6.800c0-3.800 3-6.900 7-6.900z" fill="#e6e6e6"/><circle cx="7.500" cy="9" r="1.300" fill="#4b4b4b"/><circle cx="10.500" cy="7" r="1.300" fill="#4b4b4b"/><circle cx="14" cy="8" r="1.300" fill="#4b4b4b"/><circle cx="7.300" cy="12.800" r="1.300" fill="#4b4b4b"/></g><rect x="10.500" y="13.500" width="9" height="4.500" fill="#4b4b4b" stroke="#e6e6e6" stroke-width="1.200"/><rect x="12" y="15" width="6" height="1.600" fill="#e6e6e6"/></svg></div>
<div style="left:103px;top:97px;width:88px;height:213px;background:linear-gradient(to bottom,rgba(0,0,0,0),#000),linear-gradient(to right,#fff,#ff1a10)"></div>
<div style="left:195px;top:97px;width:20px;height:213px;background:linear-gradient(to bottom,#ff0000 0%,#ff00ff 16.600%,#0000ff 33.300%,#00ffff 50%,#00ff00 66.600%,#ffff00 83.300%,#ff0000 100%)"></div>
<svg width="112" height="213" viewBox="0 0 112 213" style="position:absolute;left:0;top:0;left:103px;top:97px;overflow:hidden"><circle cx="0" cy="213" r="5" fill="none" stroke="#fff" stroke-width="2.200"/><circle cx="102" cy="210" r="5" fill="none" stroke="#fff" stroke-width="2.400"/></svg>
<div class="panel" style="left:35px;top:317px;width:183px;height:127px"></div>
<div class="ptitle" style="left:35px;top:317px;width:183px;height:22px"></div><span class="tx" style="left:70.5px;top:323.89px;font-size:11px;line-height:11px;color:#ddd;font-weight:normal;letter-spacing:-0.27px;">Cọ: Mapping Pen</span><svg width="30" height="12" viewBox="0 0 30 12" style="position:absolute;left:0;top:0;left:187px;top:323px"><path d="M5 2.5h-4.5v7h7v-4.5" fill="none" stroke="#ccc" stroke-width="1.2"/><path d="M4.5 5.5l5 -5" stroke="#ccc" stroke-width="1.2"/><path d="M6 0h4v4z" fill="#ccc"/><path d="M18 2.5l7.5 7.5M25.5 2.5l-7.5 7.5" stroke="#cfcfcf" stroke-width="2.3" stroke-linecap="butt"/></svg>
<div style="left:37px;top:340px;width:158px;height:71px;background:#585858;overflow:hidden"><div style="left:0;top:0;width:158px;height:20px;background:#4d9ad6"></div><div style="left:0;top:20px;width:158px;height:1px;background:#7a7a7a"></div><div style="left:0;top:40px;width:158px;height:1px;background:#7a7a7a"></div><div style="left:0;top:60px;width:158px;height:1px;background:#7a7a7a"></div><div style="left:3px;top:3px;width:14px;height:14px;background:#fa3232;border:1px solid #7a1818"></div><div style="left:3px;top:24px;width:14px;height:13px;background:#f4e01c"></div><div style="left:3px;top:44px;width:14px;height:13px;background:#f4e01c"></div><div style="left:3px;top:64px;width:14px;height:13px;background:#70d8fa"></div><span class="tx" style="left:23px;top:4.84px;font-size:12px;line-height:12px;color:#ee7888;font-weight:bold;letter-spacing:0.82px;">25</span><span class="tx" style="left:54.5px;top:4.84px;font-size:12px;line-height:12px;color:#fff;font-weight:bold;letter-spacing:0.39px;">Mapping Pen</span><span class="tx" style="left:23px;top:24.84px;font-size:12px;line-height:12px;color:#eee;font-weight:normal;letter-spacing:-0.18px;">50</span><span class="tx" style="left:54.5px;top:24.84px;font-size:12px;line-height:12px;color:#eee;font-weight:normal;letter-spacing:-0.08px;">Stipple Pen</span><span class="tx" style="left:23px;top:44.84px;font-size:12px;line-height:12px;color:#eee;font-weight:normal;letter-spacing:-0.18px;">50</span><span class="tx" style="left:54.5px;top:44.84px;font-size:12px;line-height:12px;color:#eee;font-weight:normal;letter-spacing:-0.34px;">Sumi</span><span class="tx" style="left:23px;top:64.84px;font-size:12px;line-height:12px;color:#eee;font-weight:normal;letter-spacing:-0.18px;">50</span><span class="tx" style="left:54.5px;top:64.84px;font-size:12px;line-height:12px;color:#eee;font-weight:normal;letter-spacing:0.14px;">Watercolor</span><svg width="14" height="14" viewBox="0 0 14 14" style="position:absolute;left:0;top:0;left:141px;top:3px"><g transform="translate(7,7)"><rect x="-1.2" y="-5.9" width="2.4" height="3.87" rx="0.6" transform="rotate(0.0)" fill="#fff"/><rect x="-1.2" y="-5.9" width="2.4" height="3.87" rx="0.6" transform="rotate(45.0)" fill="#fff"/><rect x="-1.2" y="-5.9" width="2.4" height="3.87" rx="0.6" transform="rotate(90.0)" fill="#fff"/><rect x="-1.2" y="-5.9" width="2.4" height="3.87" rx="0.6" transform="rotate(135.0)" fill="#fff"/><rect x="-1.2" y="-5.9" width="2.4" height="3.87" rx="0.6" transform="rotate(180.0)" fill="#fff"/><rect x="-1.2" y="-5.9" width="2.4" height="3.87" rx="0.6" transform="rotate(225.0)" fill="#fff"/><rect x="-1.2" y="-5.9" width="2.4" height="3.87" rx="0.6" transform="rotate(270.0)" fill="#fff"/><rect x="-1.2" y="-5.9" width="2.4" height="3.87" rx="0.6" transform="rotate(315.0)" fill="#fff"/><circle r="3.44" fill="#fff"/></g><circle cx="7" cy="7" r="1.6" fill="#4d9ad6"/></svg></div>
<div style="left:196px;top:340px;width:19px;height:71px;background:#262626"></div>
<div class="sbt" style="left:197px;top:350px;width:17px;height:50px;border-radius:7px"></div>
<div style="left:197px;top:361px;width:17px;height:8px;background:#777"></div>
<svg width="19" height="71" viewBox="0 0 19 71" style="position:absolute;left:0;top:0;left:196px;top:340px"><path d="M9.500 2l4.500 6.500h-9z" fill="#aaa"/><path d="M9.500 69l4.500-6.500h-9z" fill="#aaa"/></svg>
<div style="left:37px;top:412px;width:178px;height:29px;border:1px solid #333;background:#242424"></div>
<div class="btn " style="left:41px;top:415px;width:23px;height:23px"><svg width="23" height="23" viewBox="0 0 23 23" style="position:absolute;left:0;top:0;left:-1px;top:-1px;"><g transform="translate(11.5,9.3) scale(0.95)" fill="#e6e6e6"><circle cx="-3.6" cy="1" r="3.6"/><circle cx="0.6" cy="-1.6" r="4.6"/><circle cx="4.6" cy="1.4" r="3.2"/><rect x="-3.6" y="0.6" width="8.2" height="4"/></g><path d="M9.9 10.5h3.2v4.2h2.6l-4.2 4.4l-4.2 -4.4h2.6z" fill="#e6e6e6" stroke="#4b4b4b" stroke-width="1.1"/></svg></div>
<div class="btn " style="left:68px;top:415px;width:23px;height:23px"><svg width="23" height="23" viewBox="0 0 23 23" style="position:absolute;left:0;top:0;left:-1px;top:-1px;"><path d="M6.5 4.5h6.5l4 4v10h-10.5z" fill="none" stroke="#e6e6e6" stroke-width="1.3" stroke-linejoin="miter"/><path d="M13.0 4.5v4h4" fill="none" stroke="#e6e6e6" stroke-width="1.04"/></svg></div>
<div class="btn " style="left:95px;top:415px;width:30px;height:23px"><svg width="30" height="23" viewBox="0 0 30 23" style="position:absolute;left:0;top:0;left:-1px;top:-1px;"><path d="M4.5 4.5h6.5l4 4v10h-10.5z" fill="none" stroke="#e6e6e6" stroke-width="1.3" stroke-linejoin="miter"/><path d="M11.0 4.5v4h4" fill="none" stroke="#e6e6e6" stroke-width="1.04"/><rect x="6.500" y="10.500" width="3.200" height="3.200" fill="#e6e6e6"/><rect x="9.700" y="13.700" width="3.200" height="3.200" fill="#e6e6e6"/><path d="M19.500 10h7l-3.500 4z" fill="#fff"/></svg></div>
<div class="btn " style="left:129px;top:415px;width:23px;height:23px"><svg width="23" height="23" viewBox="0 0 23 23" style="position:absolute;left:0;top:0;left:-1px;top:-1px;"><path d="M6.5 4.5h6.5l4 4v10h-10.5z" fill="none" stroke="#e6e6e6" stroke-width="1.3" stroke-linejoin="miter"/><path d="M13.0 4.5v4h4" fill="none" stroke="#e6e6e6" stroke-width="1.04"/><text x="11.700" y="16.500" font-size="8.500" font-weight="bold" font-family="Liberation Sans,sans-serif" text-anchor="middle" fill="#e6e6e6">S</text></svg></div>
<div class="btn " style="left:156px;top:415px;width:23px;height:23px"><svg width="23" height="23" viewBox="0 0 23 23" style="position:absolute;left:0;top:0;left:-1px;top:-1px;"><path d="M4.5 17v-10.5h5l1.4 1.8h7.6v8.7z" fill="#e6e6e6"/></svg></div>
<div style="left:204px;top:415px;width:8px;height:23px;background:#555;border-radius:3px"></div>
<div class="panel" style="left:35px;top:449px;width:183px;height:279px"></div>
<div class="ptitle" style="left:35px;top:449px;width:183px;height:22px"></div><span class="tx" style="left:85.5px;top:455.89px;font-size:11px;line-height:11px;color:#ddd;font-weight:normal;letter-spacing:-0.14px;">Reference</span><svg width="30" height="12" viewBox="0 0 30 12" style="position:absolute;left:0;top:0;left:187px;top:455px"><path d="M5 2.5h-4.5v7h7v-4.5" fill="none" stroke="#ccc" stroke-width="1.2"/><path d="M4.5 5.5l5 -5" stroke="#ccc" stroke-width="1.2"/><path d="M6 0h4v4z" fill="#ccc"/><path d="M18 2.5l7.5 7.5M25.5 2.5l-7.5 7.5" stroke="#cfcfcf" stroke-width="2.3" stroke-linecap="butt"/></svg>
<div class="btn " style="left:39px;top:474px;width:23px;height:23px"><svg width="23" height="23" viewBox="0 0 23 23" style="position:absolute;left:0;top:0;left:-1px;top:-1px;"><g transform="translate(11.5,9.3) scale(0.95)" fill="#e6e6e6"><circle cx="-3.6" cy="1" r="3.6"/><circle cx="0.6" cy="-1.6" r="4.6"/><circle cx="4.6" cy="1.4" r="3.2"/><rect x="-3.6" y="0.6" width="8.2" height="4"/></g><path d="M9.9 10.5h3.2v4.2h2.6l-4.2 4.4l-4.2 -4.4h2.6z" fill="#e6e6e6" stroke="#4b4b4b" stroke-width="1.1"/></svg></div>
<div class="btn " style="left:66px;top:474px;width:22px;height:23px"><svg width="22" height="23" viewBox="0 0 22 23" style="position:absolute;left:0;top:0;left:-1px;top:-1px;"><path d="M4.500 17.500v-11.500h5l1.500 2h6.500v2.500" fill="none" stroke="#e6e6e6" stroke-width="1.300"/><path d="M4.500 17.500l3-7h12.500l-3 7z" fill="#e6e6e6"/></svg></div>
<div class="btn dk" style="left:92px;top:474px;width:22px;height:23px"><svg width="22" height="23" viewBox="0 0 22 23" style="position:absolute;left:0;top:0;left:-1px;top:-1px;"><path d="M7.500 7.500l8 8M15.500 7.500l-8 8" stroke="#eee" stroke-width="2.200"/></svg></div>
<div class="gsep" style="left:119px;top:480px;height:11px;background:#555"></div>
<div class="btn dk" style="left:125px;top:474px;width:22px;height:23px"><svg width="22" height="23" viewBox="0 0 22 23" style="position:absolute;left:0;top:0;left:-1px;top:-1px;"><circle cx="9.5" cy="10" r="4.6" fill="none" stroke="#e6e6e6" stroke-width="1.6"/><path d="M12.719999999999999 13.219999999999999l4.369999999999999 3.6799999999999997" stroke="#e6e6e6" stroke-width="2.2" stroke-linecap="round"/><path d="M6.9 10h5.2M9.5 7.4v5.2" stroke="#e6e6e6" stroke-width="1.7"/></svg></div>
<div class="btn dk" style="left:151px;top:474px;width:23px;height:23px"><svg width="23" height="23" viewBox="0 0 23 23" style="position:absolute;left:0;top:0;left:-1px;top:-1px;"><rect x="4.5" y="5.5" width="14" height="12" fill="none" stroke="#e6e6e6" stroke-width="1.3"/><path d="M10.3 10.6L7.9 8.7" stroke="#e6e6e6" stroke-width="0.9" stroke-opacity="0.7"/><path d="M6.7 7.7l2.6 0l-2.6 2.4z" fill="#e6e6e6"/><path d="M12.7 10.6L15.100000000000001 8.7" stroke="#e6e6e6" stroke-width="0.9" stroke-opacity="0.7"/><path d="M16.3 7.7l-2.6 0l2.6 2.4z" fill="#e6e6e6"/><path d="M10.3 12.4L7.9 14.3" stroke="#e6e6e6" stroke-width="0.9" stroke-opacity="0.7"/><path d="M6.7 15.3l2.6 0l-2.6 -2.4z" fill="#e6e6e6"/><path d="M12.7 12.4L15.100000000000001 14.3" stroke="#e6e6e6" stroke-width="0.9" stroke-opacity="0.7"/><path d="M16.3 15.3l-2.6 0l2.6 -2.4z" fill="#e6e6e6"/></svg></div>
<div class="btn dk" style="left:178px;top:474px;width:22px;height:23px"><svg width="22" height="23" viewBox="0 0 22 23" style="position:absolute;left:0;top:0;left:-1px;top:-1px;"><circle cx="9.5" cy="10" r="4.6" fill="none" stroke="#e6e6e6" stroke-width="1.6"/><path d="M12.719999999999999 13.219999999999999l4.369999999999999 3.6799999999999997" stroke="#e6e6e6" stroke-width="2.2" stroke-linecap="round"/><path d="M6.9 10h5.2" stroke="#e6e6e6" stroke-width="1.7"/></svg></div>
<div style="left:206px;top:474px;width:8px;height:23px;background:#4a4a4a;border-radius:3px"></div>
<div class="chk" style="left:35px;top:501px;width:182px;height:227px"></div>
<div style="left:222px;top:76px;width:131px;height:20px;background:#2b2b2b;border:1px solid #444"></div>
<div style="left:353px;top:76px;width:131px;height:20px;background:#2b2b2b;border:1px solid #444;border-left:none"></div>
<div style="left:483px;top:74px;width:130px;height:23px;background:linear-gradient(#4c4c4c,#383838 50%,#2c2c2c);border:1px solid #555;border-bottom:none;border-radius:3px 3px 0 0"></div>
<span class="tx" style="left:267.5px;top:81.69px;font-size:11px;line-height:11px;color:#ddd;font-weight:normal;letter-spacing:-0.04px;">Untitled</span>
<span class="tx" style="left:398px;top:81.69px;font-size:11px;line-height:11px;color:#ddd;font-weight:normal;letter-spacing:-0.04px;">Untitled</span>
<span class="tx" style="left:528.5px;top:80.69px;font-size:11px;line-height:11px;color:#ddd;font-weight:normal;letter-spacing:-0.04px;">Untitled</span>
<div style="left:222px;top:97px;width:502px;height:611px;background:#484745"></div>
<div style="left:723px;top:97px;width:21px;height:611px;background:#262626"></div>
<div class="sbt" style="left:724px;top:109px;width:19px;height:586px;border-radius:4px;background:linear-gradient(90deg,#2c2c2c,#444)"></div>
<div class="sbh" style="left:724px;top:338px;width:19px;height:162px;background:linear-gradient(90deg,#7a7a7a,#686868)"></div>
<svg width="21" height="611" viewBox="0 0 21 611" style="position:absolute;left:0;top:0;left:723px;top:97px"><path d="M10.500 3l4 7h-8z" fill="#aaa"/><path d="M10.500 608l4-7h-8z" fill="#888"/></svg>
<div style="left:222px;top:708px;width:522px;height:19px;background:#262626"></div>
<div style="left:234px;top:708px;width:498px;height:18px;border-radius:5px;background:linear-gradient(#454545,#2c2c2c)"></div>
<div style="left:416px;top:708px;width:132px;height:18px;border-radius:5px;background:linear-gradient(#787878,#666)"></div>
<svg width="522" height="19" viewBox="0 0 522 19" style="position:absolute;left:0;top:0;left:222px;top:708px"><path d="M3 9.500l6-4.500v9z" fill="#aaa"/><path d="M519 9.500l-6-4.500v9z" fill="#aaa"/></svg>
<div style="left:744px;top:74px;width:4px;height:654px;background:#1e1e1e"></div>
<svg width="375" height="375" viewBox="0 0 375 375" style="left:294px;top:150px;overflow:hidden"><defs><filter id="b1" x="-30%" y="-30%" width="160%" height="160%"><feGaussianBlur stdDeviation="1.600"/></filter><filter id="b2" x="-30%" y="-30%" width="160%" height="160%"><feGaussianBlur stdDeviation="1.900"/></filter><filter id="b05" x="-30%" y="-30%" width="160%" height="160%"><feGaussianBlur stdDeviation="0.500"/></filter><radialGradient id="ck"><stop offset="0" stop-color="#ff3434" stop-opacity="1"/><stop offset="0.2" stop-color="#ff4040" stop-opacity="0.95"/><stop offset="0.4" stop-color="#ff5858" stop-opacity="0.66"/><stop offset="0.62" stop-color="#ff8080" stop-opacity="0.3"/><stop offset="0.82" stop-color="#ffa0a0" stop-opacity="0.1"/><stop offset="1" stop-color="#ffb0b0" stop-opacity="0"/></radialGradient></defs><rect width="375" height="375" fill="#c4f5a4"/><ellipse cx="197" cy="421" rx="266" ry="200" fill="#fff"/><ellipse cx="90.5" cy="299.5" rx="66" ry="54" fill="url(#ck)"/><ellipse cx="267.5" cy="299" rx="66" ry="54" fill="url(#ck)"/><path transform="translate(94.2,16.5) rotate(8) scale(1.15)" d="M0 5C-2 4.600 -5.600 1.500 -5.400 -1.800C-5.200 -5 -1.200 -5.600 0 -2.800C1.200 -5.600 5.200 -5 5.400 -1.800C5.600 1.500 2 4.600 0 5z" fill="#2ec42e"/><path transform="translate(18.5,58.5) rotate(0) scale(0.85)" d="M0 5C-2 4.600 -5.600 1.500 -5.400 -1.800C-5.200 -5 -1.200 -5.600 0 -2.800C1.200 -5.600 5.200 -5 5.400 -1.800C5.600 1.500 2 4.600 0 5z" fill="#2ec42e"/><path transform="translate(206,32.3) rotate(0) scale(0.85)" d="M0 5C-2 4.600 -5.600 1.500 -5.400 -1.800C-5.200 -5 -1.200 -5.600 0 -2.800C1.200 -5.600 5.200 -5 5.400 -1.800C5.600 1.500 2 4.600 0 5z" fill="#2ec42e"/><path transform="translate(312.3,70) rotate(0) scale(1.15)" d="M0 5C-2 4.600 -5.600 1.500 -5.400 -1.800C-5.200 -5 -1.200 -5.600 0 -2.800C1.200 -5.600 5.200 -5 5.400 -1.800C5.600 1.500 2 4.600 0 5z" fill="#2ec42e"/><path transform="translate(87.6,147.5) rotate(-5) scale(1.25)" d="M0 5C-2 4.600 -5.600 1.500 -5.400 -1.800C-5.200 -5 -1.200 -5.600 0 -2.800C1.200 -5.600 5.200 -5 5.400 -1.800C5.600 1.500 2 4.600 0 5z" fill="#2ec42e"/><path transform="translate(361,187) rotate(0) scale(0.9)" d="M0 5C-2 4.600 -5.600 1.500 -5.400 -1.800C-5.200 -5 -1.200 -5.600 0 -2.800C1.200 -5.600 5.200 -5 5.400 -1.800C5.600 1.500 2 4.600 0 5z" fill="#2ec42e"/><path transform="translate(262.6,19.8) rotate(10) scale(0.9)" d="M0 5C-2 4.600 -5.600 1.500 -5.400 -1.800C-5.200 -5 -1.200 -5.600 0 -2.800C1.200 -5.600 5.200 -5 5.400 -1.800C5.600 1.500 2 4.600 0 5z" fill="#fff"/><path transform="translate(149.3,44.7) rotate(15) scale(0.9)" d="M0 5C-2 4.600 -5.600 1.500 -5.400 -1.800C-5.200 -5 -1.200 -5.600 0 -2.800C1.200 -5.600 5.200 -5 5.400 -1.800C5.600 1.500 2 4.600 0 5z" fill="#fff"/><path transform="translate(51.2,101) rotate(0) scale(0.95)" d="M0 5C-2 4.600 -5.600 1.500 -5.400 -1.800C-5.200 -5 -1.200 -5.600 0 -2.800C1.200 -5.600 5.200 -5 5.400 -1.800C5.600 1.500 2 4.600 0 5z" fill="#fff"/><path transform="translate(261.5,133.5) rotate(0) scale(0.85)" d="M0 5C-2 4.600 -5.600 1.500 -5.400 -1.800C-5.200 -5 -1.200 -5.600 0 -2.800C1.200 -5.600 5.200 -5 5.400 -1.800C5.600 1.500 2 4.600 0 5z" fill="#fff"/><path transform="translate(130.5,149) rotate(0) scale(1)" d="M0 5C-2 4.600 -5.600 1.500 -5.400 -1.800C-5.200 -5 -1.200 -5.600 0 -2.800C1.200 -5.600 5.200 -5 5.400 -1.800C5.600 1.500 2 4.600 0 5z" fill="#fff"/><path transform="translate(333,153.5) rotate(10) scale(0.95)" d="M0 5C-2 4.600 -5.600 1.500 -5.400 -1.800C-5.200 -5 -1.200 -5.600 0 -2.800C1.200 -5.600 5.200 -5 5.400 -1.800C5.600 1.500 2 4.600 0 5z" fill="#fff"/><ellipse cx="19.500" cy="206.500" rx="4.500" ry="3.400" fill="#fff"/><ellipse cx="355" cy="231" rx="4.200" ry="3.200" fill="#fff"/><path d="M91.5 59.0C91.9 57.1 93.2 54.5 95.0 53.0C96.8 51.5 98.8 50.1 102.4 50.2C106.0 50.3 112.3 51.7 116.4 53.7C120.5 55.8 124.5 59.9 127.0 62.5C129.5 65.2 131.1 67.8 131.4 69.6C131.7 71.4 132.1 72.7 128.7 73.1C125.3 73.5 116.2 72.4 111.2 71.8C106.2 71.2 102.0 70.8 98.9 69.5C95.8 68.2 93.9 66.0 92.7 64.3C91.5 62.5 91.1 60.9 91.5 59.0z" fill="#76bcc2"/><path d="M128.7 79.2C130.0 80.5 128.8 83.3 127.9 86.2C127.0 89.1 125.1 93.6 123.5 96.8C121.9 100.0 120.2 103.2 118.2 105.6C116.2 107.9 113.8 110.3 111.2 110.9C108.6 111.5 104.8 110.6 102.4 109.1C100.1 107.6 97.5 105.0 97.1 102.1C96.6 99.2 98.0 94.6 99.7 91.5C101.5 88.4 104.2 85.8 107.6 83.6C111.0 81.4 116.4 79.0 119.9 78.3C123.4 77.6 127.4 77.9 128.7 79.2z" fill="#76bcc2"/><path d="M95 61c.3-3 1.800-5.300 4-6.400" fill="none" stroke="#e8fafa" stroke-width="1.600" stroke-linecap="round"/><path d="M124.300 82.200C118 82.500 107 90 105 104.700" fill="none" stroke="#f8ffff" stroke-width="2" stroke-linecap="round"/><g transform="translate(3.2,-3)" filter="url(#b1)" opacity="0.85"><text transform="scale(0.8,1.06)" x="171.9 222.5 261.2" y="116.5 116.0 113.7" rotate="3 5 6" font-family="Liberation Sans,sans-serif" font-size="57" fill="#000" stroke="#000" stroke-width="4.32" stroke-linejoin="round" stroke-linecap="round">BFF</text></g><g transform="translate(0,0)" ><text transform="scale(0.8,1.06)" x="171.9 222.5 261.2" y="116.5 116.0 113.7" rotate="3 5 6" font-family="Liberation Sans,sans-serif" font-size="57" fill="#fff" stroke="#fff" stroke-width="4.050000000000001" stroke-linejoin="round" stroke-linecap="round">BFF</text></g><path filter="url(#b2)" d="M162.5 174.3C162.7 171.1 163.2 165.6 165.0 163.0C166.8 160.4 170.3 159.0 173.0 158.5C175.7 158.0 178.9 159.2 181.0 160.0C183.1 160.8 184.0 164.3 185.5 163.5C187.0 162.7 187.6 157.0 190.0 155.0C192.4 153.0 196.2 151.3 199.7 151.5C203.2 151.7 208.2 153.1 211.0 156.0C213.8 158.9 216.4 164.0 216.5 169.0C216.6 174.0 213.9 181.6 211.5 186.1C209.1 190.6 205.3 193.4 202.0 196.0C198.7 198.6 195.5 201.2 191.8 201.5C188.1 201.8 183.6 199.4 180.0 197.5C176.4 195.6 172.7 192.6 170.0 190.0C167.3 187.4 165.3 184.8 164.1 182.2C162.8 179.6 162.3 177.5 162.5 174.3z" fill="#fc1010"/><path d="M172 159.500c-5 4-8 10.500-6.500 17" fill="none" stroke="#fff" stroke-width="1.900" stroke-linecap="round"/><path d="M171.500 189.500l5.500 3" stroke="#fff" stroke-width="2" stroke-linecap="round"/><path d="M67 200.500C88 193 110 190 131 183.500" fill="none" stroke="#fff" stroke-width="3" stroke-linecap="round"/><circle cx="72" cy="195.5" r="3" fill="#fff"/><circle cx="84" cy="198" r="3.2" fill="#fff"/><circle cx="96" cy="189" r="3" fill="#fff"/><circle cx="110" cy="193.5" r="3.4" fill="#fff"/><circle cx="124" cy="183" r="3" fill="#fff"/><path d="M242 187.500C263 192 290 199 312 207" fill="none" stroke="#fff" stroke-width="2.800" stroke-linecap="round"/><circle cx="252" cy="186.5" r="2.8" fill="#fff"/><circle cx="264" cy="194" r="3" fill="#fff"/><circle cx="280" cy="195.5" r="3" fill="#fff"/><circle cx="291" cy="203" r="3.4" fill="#fff"/><text x="6" y="257" font-family="Liberation Serif,serif" font-style="italic" font-size="15" fill="#111" transform="rotate(-14 6 257)">@ Bd</text><ellipse cx="117" cy="275.500" rx="13.500" ry="6" transform="rotate(-30 117 275.500)" fill="#000"/><path d="M114 277.200l9-5" stroke="#fff" stroke-width="1.300" stroke-linecap="round"/><ellipse cx="253.500" cy="278.500" rx="14" ry="6.200" transform="rotate(35 253.500 278.500)" fill="#000"/><path d="M250 277.500l6.500 4.300" stroke="#fff" stroke-width="1.500" stroke-linecap="round"/><path d="M114 318.500C124 319 134 321 138 325.500C132 331 123 335 116 337" fill="none" stroke="#000" stroke-width="5" stroke-linecap="round" stroke-linejoin="round"/><path d="M249.500 319C243 320 236 323 234.500 326.500C240 331 250 334.500 258 335.500" fill="none" stroke="#000" stroke-width="5" stroke-linecap="round" stroke-linejoin="round"/><path d="M172 305.500C174.500 310 178 314.500 182.500 314.500C187 314 190.500 308 191.500 303" fill="none" stroke="#000" stroke-width="4.800" stroke-linecap="round"/><path d="M34.5 0V375M0 34.5H375M69.5 0V375M0 69.5H375M103.5 0V375M0 103.5H375M138.5 0V375M0 138.5H375M172.5 0V375M0 172.5H375M207.5 0V375M0 207.5H375M241.5 0V375M0 241.5H375M276.5 0V375M0 276.5H375M310.5 0V375M0 310.5H375M344.5 0V375M0 344.5H375" stroke="#2030d8" stroke-opacity="0.370" stroke-width="1" fill="none"/></svg>
<div class="panel" style="left:748px;top:74px;width:276px;height:110px"></div>
<div class="ptitle" style="left:748px;top:74px;width:276px;height:22px"></div><span class="tx" style="left:850.5px;top:80.89px;font-size:11px;line-height:11px;color:#ddd;font-weight:normal;letter-spacing:-0.19px;">Hoa tiêu</span><svg width="30" height="12" viewBox="0 0 30 12" style="position:absolute;left:0;top:0;left:993px;top:80px"><path d="M5 2.5h-4.5v7h7v-4.5" fill="none" stroke="#ccc" stroke-width="1.2"/><path d="M4.5 5.5l5 -5" stroke="#ccc" stroke-width="1.2"/><path d="M6 0h4v4z" fill="#ccc"/><path d="M18 2.5l7.5 7.5M25.5 2.5l-7.5 7.5" stroke="#cfcfcf" stroke-width="2.3" stroke-linecap="butt"/></svg>
<div class="btn " style="left:752px;top:99px;width:23px;height:23px"><svg width="23" height="23" viewBox="0 0 23 23" style="position:absolute;left:0;top:0;left:-1px;top:-1px;"><circle cx="10" cy="10.5" r="4.8" fill="none" stroke="#e6e6e6" stroke-width="1.6"/><path d="M13.36 13.86l4.56 3.84" stroke="#e6e6e6" stroke-width="2.2" stroke-linecap="round"/><path d="M8.6 8.9l1.6 -1.2v5.8" fill="none" stroke="#e6e6e6" stroke-width="1.5"/></svg></div>
<div class="gsep" style="left:780px;top:105px;height:11px;background:#555"></div>
<div class="btn " style="left:786px;top:99px;width:23px;height:23px"><svg width="23" height="23" viewBox="0 0 23 23" style="position:absolute;left:0;top:0;left:-1px;top:-1px;"><circle cx="10" cy="10.5" r="4.8" fill="none" stroke="#e6e6e6" stroke-width="1.6"/><path d="M13.36 13.86l4.56 3.84" stroke="#e6e6e6" stroke-width="2.2" stroke-linecap="round"/><path d="M7.4 10.5h5.2M10 7.9v5.2" stroke="#e6e6e6" stroke-width="1.7"/></svg></div>
<div class="btn " style="left:813px;top:99px;width:23px;height:23px"><svg width="23" height="23" viewBox="0 0 23 23" style="position:absolute;left:0;top:0;left:-1px;top:-1px;"><rect x="4.5" y="5.5" width="14" height="12" fill="none" stroke="#e6e6e6" stroke-width="1.3"/><path d="M10.3 10.6L7.9 8.7" stroke="#e6e6e6" stroke-width="0.9" stroke-opacity="0.7"/><path d="M6.7 7.7l2.6 0l-2.6 2.4z" fill="#e6e6e6"/><path d="M12.7 10.6L15.100000000000001 8.7" stroke="#e6e6e6" stroke-width="0.9" stroke-opacity="0.7"/><path d="M16.3 7.7l-2.6 0l2.6 2.4z" fill="#e6e6e6"/><path d="M10.3 12.4L7.9 14.3" stroke="#e6e6e6" stroke-width="0.9" stroke-opacity="0.7"/><path d="M6.7 15.3l2.6 0l-2.6 -2.4z" fill="#e6e6e6"/><path d="M12.7 12.4L15.100000000000001 14.3" stroke="#e6e6e6" stroke-width="0.9" stroke-opacity="0.7"/><path d="M16.3 15.3l-2.6 0l2.6 -2.4z" fill="#e6e6e6"/></svg></div>
<div class="btn " style="left:840px;top:99px;width:23px;height:23px"><svg width="23" height="23" viewBox="0 0 23 23" style="position:absolute;left:0;top:0;left:-1px;top:-1px;"><circle cx="10" cy="10.5" r="4.8" fill="none" stroke="#e6e6e6" stroke-width="1.6"/><path d="M13.36 13.86l4.56 3.84" stroke="#e6e6e6" stroke-width="2.2" stroke-linecap="round"/><path d="M7.4 10.5h5.2" stroke="#e6e6e6" stroke-width="1.7"/></svg></div>
<div class="gsep" style="left:868px;top:105px;height:11px;background:#555"></div>
<div class="btn " style="left:874px;top:99px;width:23px;height:23px"><svg width="23" height="23" viewBox="0 0 23 23" style="position:absolute;left:0;top:0;left:-1px;top:-1px;"><path d="M11.500 4.500a7 7 0 1 1 -6.600 4.600" fill="none" stroke="#e6e6e6" stroke-width="1.500"/><path d="M2.500 9.500l4.800-2.300l.6 4.600z" fill="#e6e6e6"/><rect x="8" y="8" width="7.500" height="6" rx="1" fill="#e6e6e6" transform="rotate(-20 11.500 11.500)"/></svg></div>
<div class="btn dk" style="left:901px;top:99px;width:23px;height:23px"><svg width="23" height="23" viewBox="0 0 23 23" style="position:absolute;left:0;top:0;left:-1px;top:-1px;"><rect x="7" y="7.500" width="9" height="8" fill="#e6e6e6"/><path d="M4.500 5l3.500 3M18.500 5l-3.500 3M4.500 18l3.500-3M18.500 18l-3.500-3" stroke="#e6e6e6" stroke-width="1.300"/><path d="M3.500 4h3.500l-3.500 3zM19.500 4h-3.500l3.500 3zM3.500 19h3.500l-3.500-3zM19.500 19h-3.500l3.500-3z" fill="#e6e6e6"/></svg></div>
<div class="btn " style="left:928px;top:99px;width:23px;height:23px"><svg width="23" height="23" viewBox="0 0 23 23" style="position:absolute;left:0;top:0;left:-1px;top:-1px;"><path d="M11.500 4.500a7 7 0 1 0 6.600 4.600" fill="none" stroke="#e6e6e6" stroke-width="1.500"/><path d="M20.500 9.500l-4.800-2.300l-.6 4.600z" fill="#e6e6e6"/><rect x="8" y="8" width="7.500" height="6" rx="1" fill="#e6e6e6" transform="rotate(20 11.500 11.500)"/></svg></div>
<div class="gsep" style="left:956px;top:105px;height:11px;background:#555"></div>
<div class="btn " style="left:962px;top:99px;width:23px;height:23px"><svg width="23" height="23" viewBox="0 0 23 23" style="position:absolute;left:0;top:0;left:-1px;top:-1px;"><rect x="5" y="10" width="5" height="7.500" fill="#e6e6e6"/><rect x="14" y="10" width="4.500" height="7.500" fill="none" stroke="#e6e6e6" stroke-width="1.200"/><path d="M11.800 7v12" stroke="#e6e6e6" stroke-width="1" stroke-dasharray="1.500 1"/><path d="M7 8.500c1-4 8.500-4.500 10 0" fill="none" stroke="#e6e6e6" stroke-width="1.300"/></svg></div>
<div style="left:748px;top:125px;width:276px;height:57px;background:#484745"></div>
<div style="left:848px;top:125px;width:4px;height:57px;background:linear-gradient(90deg,#b01010,#f02020)"></div>
<div style="left:919px;top:125px;width:3px;height:57px;background:#e81010"></div>
<svg width="55" height="55" viewBox="0 0 375 375" style="left:859px;top:126px;overflow:hidden"><defs><filter id="nb1" x="-30%" y="-30%" width="160%" height="160%"><feGaussianBlur stdDeviation="1.600"/></filter><filter id="nb2" x="-30%" y="-30%" width="160%" height="160%"><feGaussianBlur stdDeviation="1.900"/></filter><filter id="nb05" x="-30%" y="-30%" width="160%" height="160%"><feGaussianBlur stdDeviation="0.500"/></filter><radialGradient id="nck"><stop offset="0" stop-color="#ff3434" stop-opacity="1"/><stop offset="0.2" stop-color="#ff4040" stop-opacity="0.95"/><stop offset="0.4" stop-color="#ff5858" stop-opacity="0.66"/><stop offset="0.62" stop-color="#ff8080" stop-opacity="0.3"/><stop offset="0.82" stop-color="#ffa0a0" stop-opacity="0.1"/><stop offset="1" stop-color="#ffb0b0" stop-opacity="0"/></radialGradient></defs><rect width="375" height="375" fill="#c4f5a4"/><ellipse cx="197" cy="421" rx="266" ry="200" fill="#fff"/><ellipse cx="90.5" cy="299.5" rx="66" ry="54" fill="url(#nck)"/><ellipse cx="267.5" cy="299" rx="66" ry="54" fill="url(#nck)"/><path transform="translate(94.2,16.5) rotate(8) scale(1.15)" d="M0 5C-2 4.600 -5.600 1.500 -5.400 -1.800C-5.200 -5 -1.200 -5.600 0 -2.800C1.200 -5.600 5.200 -5 5.400 -1.800C5.600 1.500 2 4.600 0 5z" fill="#2ec42e"/><path transform="translate(18.5,58.5) rotate(0) scale(0.85)" d="M0 5C-2 4.600 -5.600 1.500 -5.400 -1.800C-5.200 -5 -1.200 -5.600 0 -2.800C1.200 -5.600 5.200 -5 5.400 -1.800C5.600 1.500 2 4.600 0 5z" fill="#2ec42e"/><path transform="translate(206,32.3) rotate(0) scale(0.85)" d="M0 5C-2 4.600 -5.600 1.500 -5.400 -1.800C-5.200 -5 -1.200 -5.600 0 -2.800C1.200 -5.600 5.200 -5 5.400 -1.800C5.600 1.500 2 4.600 0 5z" fill="#2ec42e"/><path transform="translate(312.3,70) rotate(0) scale(1.15)" d="M0 5C-2 4.600 -5.600 1.500 -5.400 -1.800C-5.200 -5 -1.200 -5.600 0 -2.800C1.200 -5.600 5.200 -5 5.400 -1.800C5.600 1.500 2 4.600 0 5z" fill="#2ec42e"/><path transform="translate(87.6,147.5) rotate(-5) scale(1.25)" d="M0 5C-2 4.600 -5.600 1.500 -5.400 -1.800C-5.200 -5 -1.200 -5.600 0 -2.800C1.200 -5.600 5.200 -5 5.400 -1.800C5.600 1.500 2 4.600 0 5z" fill="#2ec42e"/><path transform="translate(361,187) rotate(0) scale(0.9)" d="M0 5C-2 4.600 -5.600 1.500 -5.400 -1.800C-5.200 -5 -1.200 -5.600 0 -2.800C1.200 -5.600 5.200 -5 5.400 -1.800C5.600 1.500 2 4.600 0 5z" fill="#2ec42e"/><path transform="translate(262.6,19.8) rotate(10) scale(0.9)" d="M0 5C-2 4.600 -5.600 1.500 -5.400 -1.800C-5.200 -5 -1.200 -5.600 0 -2.800C1.200 -5.600 5.200 -5 5.400 -1.800C5.600 1.500 2 4.600 0 5z" fill="#fff"/><path transform="translate(149.3,44.7) rotate(15) scale(0.9)" d="M0 5C-2 4.600 -5.600 1.500 -5.400 -1.800C-5.200 -5 -1.200 -5.600 0 -2.800C1.200 -5.600 5.200 -5 5.400 -1.800C5.600 1.500 2 4.600 0 5z" fill="#fff"/><path transform="translate(51.2,101) rotate(0) scale(0.95)" d="M0 5C-2 4.600 -5.600 1.500 -5.400 -1.800C-5.200 -5 -1.200 -5.600 0 -2.800C1.200 -5.600 5.200 -5 5.400 -1.800C5.600 1.500 2 4.600 0 5z" fill="#fff"/><path transform="translate(261.5,133.5) rotate(0) scale(0.85)" d="M0 5C-2 4.600 -5.600 1.500 -5.400 -1.800C-5.200 -5 -1.200 -5.600 0 -2.800C1.200 -5.600 5.200 -5 5.400 -1.800C5.600 1.500 2 4.600 0 5z" fill="#fff"/><path transform="translate(130.5,149) rotate(0) scale(1)" d="M0 5C-2 4.600 -5.600 1.500 -5.400 -1.800C-5.200 -5 -1.200 -5.600 0 -2.800C1.200 -5.600 5.200 -5 5.400 -1.800C5.600 1.500 2 4.600 0 5z" fill="#fff"/><path transform="translate(333,153.5) rotate(10) scale(0.95)" d="M0 5C-2 4.600 -5.600 1.500 -5.400 -1.800C-5.200 -5 -1.200 -5.600 0 -2.800C1.200 -5.600 5.200 -5 5.400 -1.800C5.600 1.500 2 4.600 0 5z" fill="#fff"/><ellipse cx="19.500" cy="206.500" rx="4.500" ry="3.400" fill="#fff"/><ellipse cx="355" cy="231" rx="4.200" ry="3.200" fill="#fff"/><path d="M91.5 59.0C91.9 57.1 93.2 54.5 95.0 53.0C96.8 51.5 98.8 50.1 102.4 50.2C106.0 50.3 112.3 51.7 116.4 53.7C120.5 55.8 124.5 59.9 127.0 62.5C129.5 65.2 131.1 67.8 131.4 69.6C131.7 71.4 132.1 72.7 128.7 73.1C125.3 73.5 116.2 72.4 111.2 71.8C106.2 71.2 102.0 70.8 98.9 69.5C95.8 68.2 93.9 66.0 92.7 64.3C91.5 62.5 91.1 60.9 91.5 59.0z" fill="#76bcc2"/><path d="M128.7 79.2C130.0 80.5 128.8 83.3 127.9 86.2C127.0 89.1 125.1 93.6 123.5 96.8C121.9 100.0 120.2 103.2 118.2 105.6C116.2 107.9 113.8 110.3 111.2 110.9C108.6 111.5 104.8 110.6 102.4 109.1C100.1 107.6 97.5 105.0 97.1 102.1C96.6 99.2 98.0 94.6 99.7 91.5C101.5 88.4 104.2 85.8 107.6 83.6C111.0 81.4 116.4 79.0 119.9 78.3C123.4 77.6 127.4 77.9 128.7 79.2z" fill="#76bcc2"/><path d="M95 61c.3-3 1.800-5.300 4-6.400" fill="none" stroke="#e8fafa" stroke-width="1.600" stroke-linecap="round"/><path d="M124.300 82.200C118 82.500 107 90 105 104.700" fill="none" stroke="#f8ffff" stroke-width="2" stroke-linecap="round"/><g transform="translate(3.2,-3)" filter="url(#nb1)" opacity="0.85"><text transform="scale(0.8,1.06)" x="171.9 222.5 261.2" y="116.5 116.0 113.7" rotate="3 5 6" font-family="Liberation Sans,sans-serif" font-size="57" fill="#000" stroke="#000" stroke-width="4.32" stroke-linejoin="round" stroke-linecap="round">BFF</text></g><g transform="translate(0,0)" ><text transform="scale(0.8,1.06)" x="171.9 222.5 261.2" y="116.5 116.0 113.7" rotate="3 5 6" font-family="Liberation Sans,sans-serif" font-size="57" fill="#fff" stroke="#fff" stroke-width="4.050000000000001" stroke-linejoin="round" stroke-linecap="round">BFF</text></g><path filter="url(#nb2)" d="M162.5 174.3C162.7 171.1 163.2 165.6 165.0 163.0C166.8 160.4 170.3 159.0 173.0 158.5C175.7 158.0 178.9 159.2 181.0 160.0C183.1 160.8 184.0 164.3 185.5 163.5C187.0 162.7 187.6 157.0 190.0 155.0C192.4 153.0 196.2 151.3 199.7 151.5C203.2 151.7 208.2 153.1 211.0 156.0C213.8 158.9 216.4 164.0 216.5 169.0C216.6 174.0 213.9 181.6 211.5 186.1C209.1 190.6 205.3 193.4 202.0 196.0C198.7 198.6 195.5 201.2 191.8 201.5C188.1 201.8 183.6 199.4 180.0 197.5C176.4 195.6 172.7 192.6 170.0 190.0C167.3 187.4 165.3 184.8 164.1 182.2C162.8 179.6 162.3 177.5 162.5 174.3z" fill="#fc1010"/><path d="M172 159.500c-5 4-8 10.500-6.500 17" fill="none" stroke="#fff" stroke-width="1.900" stroke-linecap="round"/><path d="M171.500 189.500l5.500 3" stroke="#fff" stroke-width="2" stroke-linecap="round"/><path d="M67 200.500C88 193 110 190 131 183.500" fill="none" stroke="#fff" stroke-width="3" stroke-linecap="round"/><circle cx="72" cy="195.5" r="3" fill="#fff"/><circle cx="84" cy="198" r="3.2" fill="#fff"/><circle cx="96" cy="189" r="3" fill="#fff"/><circle cx="110" cy="193.5" r="3.4" fill="#fff"/><circle cx="124" cy="183" r="3" fill="#fff"/><path d="M242 187.500C263 192 290 199 312 207" fill="none" stroke="#fff" stroke-width="2.800" stroke-linecap="round"/><circle cx="252" cy="186.5" r="2.8" fill="#fff"/><circle cx="264" cy="194" r="3" fill="#fff"/><circle cx="280" cy="195.5" r="3" fill="#fff"/><circle cx="291" cy="203" r="3.4" fill="#fff"/><text x="6" y="257" font-family="Liberation Serif,serif" font-style="italic" font-size="15" fill="#111" transform="rotate(-14 6 257)">@ Bd</text><ellipse cx="117" cy="275.500" rx="13.500" ry="6" transform="rotate(-30 117 275.500)" fill="#000"/><path d="M114 277.200l9-5" stroke="#fff" stroke-width="1.300" stroke-linecap="round"/><ellipse cx="253.500" cy="278.500" rx="14" ry="6.200" transform="rotate(35 253.500 278.500)" fill="#000"/><path d="M250 277.500l6.500 4.300" stroke="#fff" stroke-width="1.500" stroke-linecap="round"/><path d="M114 318.500C124 319 134 321 138 325.500C132 331 123 335 116 337" fill="none" stroke="#000" stroke-width="5" stroke-linecap="round" stroke-linejoin="round"/><path d="M249.500 319C243 320 236 323 234.500 326.500C240 331 250 334.500 258 335.500" fill="none" stroke="#000" stroke-width="5" stroke-linecap="round" stroke-linejoin="round"/><path d="M172 305.500C174.500 310 178 314.500 182.500 314.500C187 314 190.500 308 191.500 303" fill="none" stroke="#000" stroke-width="4.800" stroke-linecap="round"/></svg>
<div class="panel" style="left:748px;top:186px;width:276px;height:312px"></div>
<div class="ptitle" style="left:748px;top:186px;width:276px;height:21px"></div><span class="tx" style="left:862.5px;top:192.89px;font-size:11px;line-height:11px;color:#ddd;font-weight:normal;letter-spacing:-0.82px;">Lớp</span><svg width="30" height="12" viewBox="0 0 30 12" style="position:absolute;left:0;top:0;left:993px;top:192px"><path d="M5 2.5h-4.5v7h7v-4.5" fill="none" stroke="#ccc" stroke-width="1.2"/><path d="M4.5 5.5l5 -5" stroke="#ccc" stroke-width="1.2"/><path d="M6 0h4v4z" fill="#ccc"/><path d="M18 2.5l7.5 7.5M25.5 2.5l-7.5 7.5" stroke="#cfcfcf" stroke-width="2.3" stroke-linecap="butt"/></svg>
<span class="tx" style="left:754px;top:216.69px;font-size:11px;line-height:11px;color:#ddd;font-weight:normal;letter-spacing:-0.03px;">Độ trong</span>
<div style="left:822px;top:212px;width:159px;height:18px;background:#151515"></div>
<div style="left:823px;top:213px;width:157px;height:15px;background:linear-gradient(90deg,#7ec6f8,#5aa6dc 60%,#4c98d0)"></div>
<span class="tx" style="left:987px;top:216.69px;font-size:11px;line-height:11px;color:#ddd;font-weight:normal;letter-spacing:-0.24px;">100 %</span>
<span class="tx" style="left:754px;top:241.69px;font-size:11px;line-height:11px;color:#ddd;font-weight:normal;letter-spacing:-0.20px;">Pha trộn</span>
<div style="left:825px;top:236px;width:193px;height:21px;background:#4a4a4a;border-radius:3px"></div>
<span class="tx" style="left:827.5px;top:241.69px;font-size:11px;line-height:11px;color:#ddd;font-weight:normal;letter-spacing:-0.38px;">Bình thường</span>
<svg width="8" height="5" viewBox="0 0 8 5" style="position:absolute;left:0;top:0;left:1005.500px;top:244px"><path d="M0.500 0h7l-3.500 4z" fill="#aaa"/></svg>
<div class="cb" style="left:757px;top:267px;border-color:#4a4a4a"></div>
<span class="tx" style="left:773px;top:267.69px;font-size:11px;line-height:11px;color:#777;font-weight:normal;letter-spacing:-0.18px;">Bảo vệ alpha</span>
<div class="cb" style="left:848px;top:267px;border-color:#ddd"></div>
<span class="tx" style="left:864.5px;top:267.69px;font-size:11px;line-height:11px;color:#ddd;font-weight:normal;letter-spacing:-0.36px;">Xén bớt</span>
<div class="cb" style="left:938px;top:267px;border-color:#ddd"></div>
<span class="tx" style="left:954.5px;top:267.69px;font-size:11px;line-height:11px;color:#ddd;font-weight:normal;letter-spacing:-0.43px;">Khóa</span>
<div style="left:751px;top:287px;width:250px;height:177px;background:#585858;overflow:hidden"><div style="left:0;top:39px;width:250px;height:1px;background:#2e2e2e"></div><div style="left:4px;top:14px;width:11px;height:11px;border-radius:6px;background:radial-gradient(#e8e8e8 40%,#aaa 75%,#777)"></div><div class="chk" style="left:34px;top:2px;width:34px;height:35px;background-size:10px 10px;background-position:0 0,5px 5px;background-color:#fff;border:1px solid #f8f8f8"></div><span class="tx" style="left:85px;top:13.84px;font-size:12px;line-height:12px;color:#eee;font-weight:normal;letter-spacing:-0.12px;">Lớp17</span><div style="left:237px;top:25px;width:11px;height:11px;background:#000"></div><span class="tx" style="left:229px;top:27.38px;font-size:9px;line-height:9px;color:#eee;font-weight:normal;letter-spacing:0.00px;">8</span><div style="left:0;top:79px;width:250px;height:1px;background:#2e2e2e"></div><div style="left:4px;top:54px;width:11px;height:11px;border-radius:6px;background:radial-gradient(#e8e8e8 40%,#aaa 75%,#777)"></div><div class="chk" style="left:34px;top:42px;width:34px;height:35px;background-size:10px 10px;background-position:0 0,5px 5px;background-color:#fff;border:1px solid #f8f8f8"></div><span class="tx" style="left:85px;top:53.84px;font-size:12px;line-height:12px;color:#eee;font-weight:normal;letter-spacing:0.03px;">Lớp7</span><div style="left:237px;top:65px;width:11px;height:11px;background:#fff"></div><span class="tx" style="left:230px;top:67.38px;font-size:9px;line-height:9px;color:#eee;font-weight:normal;letter-spacing:0.00px;">1</span><div style="left:0;top:119px;width:250px;height:1px;background:#2e2e2e"></div><div style="left:4px;top:94px;width:11px;height:11px;border-radius:6px;background:radial-gradient(#e8e8e8 40%,#aaa 75%,#777)"></div><div class="chk" style="left:34px;top:82px;width:34px;height:35px;background-size:10px 10px;background-position:0 0,5px 5px;background-color:#fff;border:1px solid #f8f8f8"></div><span class="tx" style="left:85px;top:93.84px;font-size:12px;line-height:12px;color:#eee;font-weight:normal;letter-spacing:-0.12px;">Lớp15</span><div style="left:237px;top:105px;width:11px;height:11px;background:#fff"></div><span class="tx" style="left:229px;top:107.38px;font-size:9px;line-height:9px;color:#eee;font-weight:normal;letter-spacing:0.00px;">8</span><div style="left:19px;top:120px;width:231px;height:39px;background:#4d9ad6"></div><div style="left:0;top:159px;width:250px;height:1px;background:#2e2e2e"></div><div style="left:4px;top:134px;width:11px;height:11px;border-radius:6px;background:radial-gradient(#e8e8e8 40%,#aaa 75%,#777)"></div><div class="chk" style="left:34px;top:122px;width:34px;height:35px;background-size:10px 10px;background-position:0 0,5px 5px;background-color:#fff;border:1px solid #f8f8f8"></div><span class="tx" style="left:85px;top:133.84px;font-size:12px;line-height:12px;color:#fff;font-weight:bold;letter-spacing:-0.21px;">Lớp14</span><div style="left:215px;top:145px;width:11px;height:11px;background:#000"></div><span class="tx" style="left:207px;top:147.38px;font-size:9px;line-height:9px;color:#eee;font-weight:normal;letter-spacing:0.00px;">8</span><svg width="20" height="20" viewBox="0 0 20 20" style="position:absolute;left:0;top:0;left:229px;top:130px"><g transform="translate(10,10)"><rect x="-1.85" y="-8.0" width="3.7" height="5.760000000000001" rx="0.6" transform="rotate(0.0)" fill="#fff"/><rect x="-1.85" y="-8.0" width="3.7" height="5.760000000000001" rx="0.6" transform="rotate(45.0)" fill="#fff"/><rect x="-1.85" y="-8.0" width="3.7" height="5.760000000000001" rx="0.6" transform="rotate(90.0)" fill="#fff"/><rect x="-1.85" y="-8.0" width="3.7" height="5.760000000000001" rx="0.6" transform="rotate(135.0)" fill="#fff"/><rect x="-1.85" y="-8.0" width="3.7" height="5.760000000000001" rx="0.6" transform="rotate(180.0)" fill="#fff"/><rect x="-1.85" y="-8.0" width="3.7" height="5.760000000000001" rx="0.6" transform="rotate(225.0)" fill="#fff"/><rect x="-1.85" y="-8.0" width="3.7" height="5.760000000000001" rx="0.6" transform="rotate(270.0)" fill="#fff"/><rect x="-1.85" y="-8.0" width="3.7" height="5.760000000000001" rx="0.6" transform="rotate(315.0)" fill="#fff"/><circle r="5.120000000000001" fill="#fff"/></g><circle cx="10" cy="10" r="2.1" fill="#4d9ad6"/></svg><svg width="20" height="8" viewBox="0 0 20 8" style="position:absolute;left:0;top:0;left:41px;top:145px"><path d="M3 5c1.500-2 2.500-2 3.500 0M13 5c1-2 2-2 3.500 0M8.500 6l1.500 1l1.500-1" stroke="#333" stroke-width="1" fill="none"/></svg><div style="left:0;top:199px;width:250px;height:1px;background:#2e2e2e"></div><div style="left:4px;top:174px;width:11px;height:11px;border-radius:6px;background:radial-gradient(#e8e8e8 40%,#aaa 75%,#777)"></div><div class="chk" style="left:34px;top:162px;width:34px;height:35px;background-size:10px 10px;background-position:0 0,5px 5px;background-color:#fff;border:1px solid #f8f8f8"></div><span class="tx" style="left:85px;top:173.84px;font-size:12px;line-height:12px;color:#eee;font-weight:normal;letter-spacing:-0.12px;">Lớp16</span><div style="left:237px;top:185px;width:11px;height:11px;background:#fff"></div><span class="tx" style="left:229px;top:187.38px;font-size:9px;line-height:9px;color:#eee;font-weight:normal;letter-spacing:0.00px;">8</span></div>
<div style="left:1003px;top:287px;width:18px;height:177px;background:#262626"></div>
<div class="sbt" style="left:1004px;top:297px;width:17px;height:156px;border-radius:7px"></div>
<div class="sbh" style="left:1004px;top:297px;width:17px;height:40px;border-radius:6px"></div>
<svg width="18" height="177" viewBox="0 0 18 177" style="position:absolute;left:0;top:0;left:1003px;top:287px"><path d="M9 1.500l4.500 6.500h-9z" fill="#aaa"/><path d="M9 175l4.500-6.500h-9z" fill="#aaa"/></svg>
<div style="left:751px;top:465px;width:270px;height:29px;border:1px solid #333;background:#242424"></div>
<div class="btn " style="left:754px;top:468px;width:23px;height:23px"><svg width="23" height="23" viewBox="0 0 23 23" style="position:absolute;left:0;top:0;left:-1px;top:-1px;"><path d="M6.5 4.5h6.5l4 4v10h-10.5z" fill="none" stroke="#e6e6e6" stroke-width="1.3" stroke-linejoin="miter"/><path d="M13.0 4.5v4h4" fill="none" stroke="#e6e6e6" stroke-width="1.04"/></svg></div>
<div class="btn " style="left:781px;top:468px;width:23px;height:23px"><svg width="23" height="23" viewBox="0 0 23 23" style="position:absolute;left:0;top:0;left:-1px;top:-1px;"><path d="M6.5 4.5h6.5l4 4v10h-10.5z" fill="none" stroke="#e6e6e6" stroke-width="1.3" stroke-linejoin="miter"/><path d="M13.0 4.5v4h4" fill="none" stroke="#e6e6e6" stroke-width="1.04"/><text x="11.700" y="16.300" font-size="8.500" font-weight="bold" font-family="Liberation Sans,sans-serif" text-anchor="middle" fill="#e6e6e6">8</text></svg></div>
<div class="btn " style="left:808px;top:468px;width:23px;height:23px"><svg width="23" height="23" viewBox="0 0 23 23" style="position:absolute;left:0;top:0;left:-1px;top:-1px;"><path d="M6.5 4.5h6.5l4 4v10h-10.5z" fill="none" stroke="#e6e6e6" stroke-width="1.3" stroke-linejoin="miter"/><path d="M13.0 4.5v4h4" fill="none" stroke="#e6e6e6" stroke-width="1.04"/><text x="11.700" y="16.300" font-size="8.500" font-weight="bold" font-family="Liberation Sans,sans-serif" text-anchor="middle" fill="#e6e6e6">1</text></svg></div>
<div class="btn " style="left:835px;top:468px;width:30px;height:23px"><svg width="30" height="23" viewBox="0 0 30 23" style="position:absolute;left:0;top:0;left:-1px;top:-1px;"><path d="M4.5 3.5h5.5l4 4v9h-9.5z" fill="none" stroke="#bbb" stroke-width="1.2" stroke-linejoin="miter"/><path d="M10.0 3.5v4h4" fill="none" stroke="#bbb" stroke-width="0.96"/><rect x="9" y="12" width="8" height="8" fill="#4b4b4b"/><path d="M9.500 16.500h6.500M12.800 13.200v6.600" stroke="#fff" stroke-width="1.800"/><path d="M19.500 9.500h7l-3.500 4.500z" fill="#fff"/></svg></div>
<div class="btn " style="left:869px;top:468px;width:23px;height:23px"><svg width="23" height="23" viewBox="0 0 23 23" style="position:absolute;left:0;top:0;left:-1px;top:-1px;"><path d="M4.5 17v-10.5h5l1.4 1.8h7.6v8.7z" fill="#e6e6e6"/></svg></div>
<div class="gsep" style="left:897px;top:474px;height:11px;background:#555"></div>
<div class="btn " style="left:903px;top:468px;width:23px;height:23px"><svg width="23" height="23" viewBox="0 0 23 23" style="position:absolute;left:0;top:0;left:-1px;top:-1px;"><rect x="8.500" y="5" width="10" height="10" fill="none" stroke="#e6e6e6" stroke-width="1.300"/><rect x="5" y="8.500" width="10" height="10" fill="#4b4b4b" stroke="#e6e6e6" stroke-width="1.300"/></svg></div>
<div class="btn " style="left:930px;top:468px;width:23px;height:23px"><svg width="23" height="23" viewBox="0 0 23 23" style="position:absolute;left:0;top:0;left:-1px;top:-1px;"><rect x="4.500" y="4.500" width="5" height="5" fill="none" stroke="#e6e6e6" stroke-width="1.200"/><rect x="4.500" y="13.500" width="5" height="5" fill="none" stroke="#e6e6e6" stroke-width="1.200"/><rect x="13" y="8" width="6.500" height="6.500" fill="#e6e6e6"/><path d="M9.500 7h2v9h-2M11.500 11.500h2" stroke="#e6e6e6" stroke-width="1.100" fill="none"/></svg></div>
<div class="gsep" style="left:958px;top:474px;height:11px;background:#555"></div>
<div class="btn " style="left:964px;top:468px;width:23px;height:23px"><svg width="23" height="23" viewBox="0 0 23 23" style="position:absolute;left:0;top:0;left:-1px;top:-1px;"><path d="M5 7.500h13M9 7v-2h5v2" stroke="#e6e6e6" stroke-width="1.600" fill="none"/><path d="M6.500 9.500h10v9.500h-10z" fill="none" stroke="#e6e6e6" stroke-width="1.500"/><path d="M9.700 11v7M13.300 11v7" stroke="#e6e6e6" stroke-width="1.500"/></svg></div>
<div class="panel" style="left:748px;top:502px;width:276px;height:226px;background:#3a3a3a"></div>
<div class="ptitle" style="left:748px;top:502px;width:276px;height:21px"></div><span class="tx" style="left:846.5px;top:508.89px;font-size:11px;line-height:11px;color:#ddd;font-weight:normal;letter-spacing:-0.47px;">Brush Size</span><svg width="30" height="12" viewBox="0 0 30 12" style="position:absolute;left:0;top:0;left:993px;top:508px"><path d="M5 2.5h-4.5v7h7v-4.5" fill="none" stroke="#ccc" stroke-width="1.2"/><path d="M4.5 5.5l5 -5" stroke="#ccc" stroke-width="1.2"/><path d="M6 0h4v4z" fill="#ccc"/><path d="M18 2.5l7.5 7.5M25.5 2.5l-7.5 7.5" stroke="#cfcfcf" stroke-width="2.3" stroke-linecap="butt"/></svg>
<div style="left:748px;top:523px;width:256px;height:205px;background:#3c3c3c"></div>
<div style="left:987px;top:523px;width:17px;height:205px;background:#484848"></div>
<div style="left:0;top:0;width:1024px;height:728px;overflow:hidden;pointer-events:none"><div style="left:748px;top:524px;width:39px;height:49px;background:#585858"></div><div style="left:767.40px;top:543.00px;width:0.8px;height:0.8px;border-radius:50%;background:#f0f0f0;opacity:0.35"></div><span class="tx" style="left:765.0px;top:562.61px;font-size:9.2px;line-height:9.2px;color:#f0f0f0;font-weight:normal;letter-spacing:-0.12px;">1</span><div style="left:788px;top:524px;width:39px;height:49px;background:#585858"></div><div style="left:807.30px;top:542.90px;width:1px;height:1px;border-radius:50%;background:#f0f0f0;opacity:0.35"></div><span class="tx" style="left:801.5px;top:562.61px;font-size:9.2px;line-height:9.2px;color:#f0f0f0;font-weight:normal;letter-spacing:-0.26px;">1.5</span><div style="left:828px;top:524px;width:39px;height:49px;background:#585858"></div><div style="left:847.05px;top:542.65px;width:1.5px;height:1.5px;border-radius:50%;background:#f0f0f0;opacity:0.8"></div><span class="tx" style="left:845.0px;top:562.61px;font-size:9.2px;line-height:9.2px;color:#f0f0f0;font-weight:normal;letter-spacing:-0.12px;">2</span><div style="left:868px;top:524px;width:39px;height:49px;background:#585858"></div><div style="left:886.30px;top:541.90px;width:3px;height:3px;border-radius:50%;background:#f0f0f0;opacity:1"></div><span class="tx" style="left:885.0px;top:562.61px;font-size:9.2px;line-height:9.2px;color:#f0f0f0;font-weight:normal;letter-spacing:-0.12px;">3</span><div style="left:909px;top:524px;width:39px;height:49px;background:#585858"></div><div style="left:927.00px;top:541.60px;width:3.6px;height:3.6px;border-radius:50%;background:#f0f0f0;opacity:1"></div><span class="tx" style="left:926.0px;top:562.61px;font-size:9.2px;line-height:9.2px;color:#f0f0f0;font-weight:normal;letter-spacing:-0.12px;">4</span><div style="left:949px;top:524px;width:39px;height:49px;background:#585858"></div><div style="left:966.40px;top:541.00px;width:4.8px;height:4.8px;border-radius:50%;background:#f0f0f0;opacity:1"></div><span class="tx" style="left:966.0px;top:562.61px;font-size:9.2px;line-height:9.2px;color:#f0f0f0;font-weight:normal;letter-spacing:-0.12px;">5</span><div style="left:748px;top:574px;width:39px;height:49px;background:#585858"></div><div style="left:764.70px;top:590.30px;width:6.2px;height:6.2px;border-radius:50%;background:#f0f0f0;opacity:1"></div><span class="tx" style="left:765.0px;top:612.61px;font-size:9.2px;line-height:9.2px;color:#f0f0f0;font-weight:normal;letter-spacing:-0.12px;">6</span><div style="left:788px;top:574px;width:39px;height:49px;background:#585858"></div><div style="left:802.80px;top:588.40px;width:10px;height:10px;border-radius:50%;background:#f0f0f0;opacity:1"></div><span class="tx" style="left:802.25px;top:612.61px;font-size:9.2px;line-height:9.2px;color:#f0f0f0;font-weight:normal;letter-spacing:0.13px;">10</span><div style="left:828px;top:574px;width:39px;height:49px;background:#585858"></div><div style="left:841.60px;top:587.20px;width:12.4px;height:12.4px;border-radius:50%;background:#f0f0f0;opacity:1"></div><span class="tx" style="left:842.25px;top:612.61px;font-size:9.2px;line-height:9.2px;color:#f0f0f0;font-weight:normal;letter-spacing:0.13px;">12</span><div style="left:868px;top:574px;width:39px;height:49px;background:#585858"></div><div style="left:880.10px;top:585.70px;width:15.4px;height:15.4px;border-radius:50%;background:#f0f0f0;opacity:1"></div><span class="tx" style="left:882.25px;top:612.61px;font-size:9.2px;line-height:9.2px;color:#f0f0f0;font-weight:normal;letter-spacing:0.13px;">15</span><div style="left:909px;top:574px;width:39px;height:49px;background:#585858"></div><div style="left:918.80px;top:583.40px;width:20px;height:20px;border-radius:50%;background:#f0f0f0;opacity:1"></div><span class="tx" style="left:923.25px;top:612.61px;font-size:9.2px;line-height:9.2px;color:#f0f0f0;font-weight:normal;letter-spacing:0.13px;">20</span><div style="left:949px;top:574px;width:39px;height:49px;background:#585858"></div><div style="left:957.30px;top:581.90px;width:23px;height:23px;border-radius:50%;background:#f0f0f0;opacity:1"></div><span class="tx" style="left:963.25px;top:612.61px;font-size:9.2px;line-height:9.2px;color:#f0f0f0;font-weight:normal;letter-spacing:0.13px;">23</span><div style="left:748px;top:624px;width:39px;height:49px;background:#585858"></div><div style="left:755.70px;top:631.30px;width:24.2px;height:24.2px;border-radius:50%;background:#f0f0f0;opacity:1"></div><span class="tx" style="left:762.25px;top:662.61px;font-size:9.2px;line-height:9.2px;color:#f0f0f0;font-weight:normal;letter-spacing:0.13px;">24</span><div style="left:788px;top:624px;width:39px;height:49px;background:#585858"></div><div style="left:795.70px;top:631.30px;width:24.2px;height:24.2px;border-radius:50%;background:#f0f0f0;opacity:1"></div><span class="tx" style="left:802.25px;top:662.61px;font-size:9.2px;line-height:9.2px;color:#f0f0f0;font-weight:normal;letter-spacing:0.13px;">25</span><div style="left:828px;top:624px;width:39px;height:49px;background:#585858"></div><div style="left:835.70px;top:631.30px;width:24.2px;height:24.2px;border-radius:50%;background:#f0f0f0;opacity:1"></div><span class="tx" style="left:842.25px;top:662.61px;font-size:9.2px;line-height:9.2px;color:#f0f0f0;font-weight:normal;letter-spacing:0.13px;">26</span><div style="left:868px;top:624px;width:39px;height:49px;background:#585858"></div><div style="left:875.70px;top:631.30px;width:24.2px;height:24.2px;border-radius:50%;background:#f0f0f0;opacity:1"></div><span class="tx" style="left:882.25px;top:662.61px;font-size:9.2px;line-height:9.2px;color:#f0f0f0;font-weight:normal;letter-spacing:0.13px;">30</span><div style="left:909px;top:624px;width:39px;height:49px;background:#585858"></div><div style="left:916.70px;top:631.30px;width:24.2px;height:24.2px;border-radius:50%;background:#f0f0f0;opacity:1"></div><span class="tx" style="left:923.25px;top:662.61px;font-size:9.2px;line-height:9.2px;color:#f0f0f0;font-weight:normal;letter-spacing:0.13px;">40</span><div style="left:949px;top:624px;width:39px;height:49px;background:#585858"></div><div style="left:956.70px;top:631.30px;width:24.2px;height:24.2px;border-radius:50%;background:#f0f0f0;opacity:1"></div><span class="tx" style="left:963.25px;top:662.61px;font-size:9.2px;line-height:9.2px;color:#f0f0f0;font-weight:normal;letter-spacing:0.13px;">50</span><div style="left:748px;top:674px;width:39px;height:49px;background:#585858"></div><div style="left:755.70px;top:681.30px;width:24.2px;height:24.2px;border-radius:50%;background:#f0f0f0;opacity:1"></div><span class="tx" style="left:762.25px;top:712.61px;font-size:9.2px;line-height:9.2px;color:#f0f0f0;font-weight:normal;letter-spacing:0.13px;">70</span><div style="left:788px;top:674px;width:39px;height:49px;background:#585858"></div><div style="left:795.70px;top:681.30px;width:24.2px;height:24.2px;border-radius:50%;background:#f0f0f0;opacity:1"></div><span class="tx" style="left:799.75px;top:712.61px;font-size:9.2px;line-height:9.2px;color:#f0f0f0;font-weight:normal;letter-spacing:0.05px;">100</span><div style="left:828px;top:674px;width:39px;height:49px;background:#585858"></div><div style="left:835.70px;top:681.30px;width:24.2px;height:24.2px;border-radius:50%;background:#f0f0f0;opacity:1"></div><span class="tx" style="left:839.75px;top:712.61px;font-size:9.2px;line-height:9.2px;color:#f0f0f0;font-weight:normal;letter-spacing:0.05px;">150</span><div style="left:868px;top:674px;width:39px;height:49px;background:#585858"></div><div style="left:875.70px;top:681.30px;width:24.2px;height:24.2px;border-radius:50%;background:#f0f0f0;opacity:1"></div><span class="tx" style="left:879.75px;top:712.61px;font-size:9.2px;line-height:9.2px;color:#f0f0f0;font-weight:normal;letter-spacing:0.05px;">200</span><div style="left:909px;top:674px;width:39px;height:49px;background:#585858"></div><div style="left:916.70px;top:681.30px;width:24.2px;height:24.2px;border-radius:50%;background:#f0f0f0;opacity:1"></div><span class="tx" style="left:920.75px;top:712.61px;font-size:9.2px;line-height:9.2px;color:#f0f0f0;font-weight:normal;letter-spacing:0.05px;">300</span><div style="left:949px;top:674px;width:39px;height:49px;background:#585858"></div><div style="left:956.70px;top:681.30px;width:24.2px;height:24.2px;border-radius:50%;background:#f0f0f0;opacity:1"></div><span class="tx" style="left:960.75px;top:712.61px;font-size:9.2px;line-height:9.2px;color:#f0f0f0;font-weight:normal;letter-spacing:0.05px;">400</span><div style="left:748px;top:724px;width:39px;height:49px;background:#585858"></div><div style="left:788px;top:724px;width:39px;height:49px;background:#585858"></div><div style="left:828px;top:724px;width:39px;height:49px;background:#585858"></div></div>
<div style="left:1004px;top:523px;width:20px;height:205px;background:#262626"></div>
<div class="sbt" style="left:1005px;top:534px;width:18px;height:182px;border-radius:7px"></div>
<div class="sbh" style="left:1005px;top:535px;width:18px;height:147px;border-radius:6px"></div>
<svg width="20" height="205" viewBox="0 0 20 205" style="position:absolute;left:0;top:0;left:1004px;top:523px"><path d="M10 1.500l4.500 6.500h-9z" fill="#aaa"/><path d="M10 203l4.500-6.500h-9z" fill="#aaa"/></svg>
<div style="left:0;top:728px;width:1024px;height:40px;background:linear-gradient(90deg,#8296b3 0px,#8498b5 52px,#a6c0de 86px,#a6c0de 604px,#8499b5 643px,#8499b5 1024px);border-top:2px solid #c6daee"></div>
<div style="left:0;top:727px;width:1024px;height:1px;background:#3a4654"></div>
<svg width="40" height="40" viewBox="0 0 40 40" style="position:absolute;left:0;top:0;left:7px;top:728px"><defs><radialGradient id="orb" cx="0.5" cy="0.95" r="0.95"><stop offset="0" stop-color="#58d8fc"/><stop offset="0.35" stop-color="#2a8cd8"/><stop offset="0.7" stop-color="#1c5ca8"/><stop offset="1" stop-color="#143c78"/></radialGradient></defs><circle cx="20" cy="20" r="17.6" fill="url(#orb)" stroke="#7aaee0" stroke-width="1.2"/><circle cx="20" cy="20" r="18.4" fill="none" stroke="#2c507c" stroke-width="0.8"/><path d="M4 17a16.500 16.500 0 0 1 32 0c-9-5-23-5-32 0z" fill="#fff" opacity="0.28"/><path d="M10.500 11c3.500-2 6.500-1.500 9 0.500l-2.200 8c-2.800-1.800-5.800-2-9-0.300z" fill="#f2602a"/><path d="M21 12c2.800 1.700 5.800 2 9.500 0l-2.200 8c-3.500 1.800-6.500 1.600-9.500-0.200z" fill="#84c83c"/><path d="M8 21c3.200-1.800 6.200-1.500 9 0.300l-2.200 8c-2.800-1.800-5.800-2-9-0.300z" fill="#38a4f0"/><path d="M18.500 22c2.800 1.700 5.800 2 9.500 0.200l-2.200 8c-3.500 1.800-6.500 1.600-9.500-0.200z" fill="#fcc832"/></svg>
<svg width="34" height="32" viewBox="0 0 34 32" style="position:absolute;left:0;top:0;left:72px;top:733px"><path d="M2 6h9l2 2h19v20h-30z" fill="#e8c860" stroke="#b89838" stroke-width="0.800"/><rect x="3" y="4" width="4" height="3" fill="#48a848"/><rect x="12" y="5" width="4" height="3" fill="#d84828"/><rect x="22" y="7" width="4" height="3" fill="#3888d8"/><path d="M2 11h30v17h-30z" fill="#f8e498"/><path d="M5 28v-10h24v10h-6v-5h-12v5z" fill="#78b8e8" stroke="#4888c0" stroke-width="0.800"/></svg>
<div style="left:121px;top:729px;width:60px;height:39px;border:1px solid #6a82a0;border-radius:2px;background:linear-gradient(#c6d8ee,#b4cae6);box-shadow:inset 0 0 0 1px rgba(255,255,255,.5)"></div>
<svg width="32" height="32" viewBox="0 0 32 32" style="position:absolute;left:0;top:0;left:135px;top:732px"><circle cx="16" cy="16" r="15" fill="#e84434"/><path d="M16 16L3 8.500A15 15 0 0 0 9.500 29.500z" fill="#34a853"/><path d="M16 16L9.500 29.500A15 15 0 0 0 31 16z" fill="#fbc02d"/><path d="M16 16h15A15 15 0 0 0 3 8.500z" fill="#e84434"/><circle cx="16" cy="16" r="7" fill="#fff"/><circle cx="16" cy="16" r="5.500" fill="#4c8bf5"/></svg>
<div style="left:184px;top:729px;width:59px;height:39px;border:1px solid #6a82a0;border-radius:2px;background:linear-gradient(90deg,#cddcee,#dfe8f3 35%,#dfe8f3 65%,#cddcee);box-shadow:inset 0 0 0 1px rgba(255,255,255,.8)"></div>
<svg width="32" height="32" viewBox="0 0 32 32" style="position:absolute;left:0;top:0;left:197.500px;top:732.500px"><rect x="0.5" y="0.5" width="31" height="31" rx="5" fill="#f8f8f8"/><defs><clipPath id="mbc"><path d="M16.500 3.500C17 6.500 21.500 8.500 23.300 12.500C25.500 18 22.500 25.500 15 25.500C8 25.500 4.800 19.500 6.300 14.500C7.800 9.500 14 7.500 16.500 3.500z"/></clipPath><linearGradient id="mbg" x1="0" y1="0" x2="1" y2="0"><stop offset="0.2" stop-color="#14a020"/><stop offset="0.65" stop-color="#3cc01c"/><stop offset="1" stop-color="#c8ec20"/></linearGradient><linearGradient id="mbb" x1="0" y1="1" x2="1" y2="0"><stop offset="0.1" stop-color="#0c90a8"/><stop offset="0.6" stop-color="#20d0ec"/><stop offset="1" stop-color="#30e0f0"/></linearGradient><linearGradient id="mbr" x1="0" y1="1" x2="1" y2="0"><stop offset="0.15" stop-color="#f00c48"/><stop offset="0.55" stop-color="#f86020"/><stop offset="0.9" stop-color="#fcb020"/></linearGradient></defs><g clip-path="url(#mbc)"><rect width="32" height="32" fill="url(#mbg)"/><path d="M3 13C10 16 19 13 22 7L27 11C26 16 24 17 21.500 18.500C17 21.500 10 23.500 4 20z" fill="url(#mbb)"/><path d="M3 14.500C10 16.500 17.500 12.500 19.500 6.500L17 2L3 6z" fill="url(#mbr)"/></g></svg>
<span class="tx" style="left:654px;top:739.64px;font-size:12px;line-height:12px;color:#fff;font-weight:normal;letter-spacing:-1.20px;">EN</span>
<svg width="1024" height="40" viewBox="0 0 1024 40" style="position:absolute;left:0;top:0;left:0;top:728px"><rect x="685" y="13" width="15" height="14" rx="4" fill="#fff" stroke="#2868d8" stroke-width="1.400"/><text x="692.500" y="22.500" font-size="6" font-weight="bold" font-family="Liberation Sans,sans-serif" fill="#2868d8" text-anchor="middle">Zalo</text><circle cx="698" cy="13.500" r="2.500" fill="#e83838"/><rect x="708.5" y="24.0" width="2.600" height="2.0" fill="#fff" stroke="#3a4250" stroke-width="0.700"/><rect x="711.7" y="21.8" width="2.600" height="4.2" fill="#fff" stroke="#3a4250" stroke-width="0.700"/><rect x="714.9" y="19.6" width="2.600" height="6.4" fill="#fff" stroke="#3a4250" stroke-width="0.700"/><rect x="718.1" y="17.4" width="2.600" height="8.600000000000001" fill="#fff" stroke="#3a4250" stroke-width="0.700"/><rect x="721.3" y="15.2" width="2.600" height="10.8" fill="#fff" stroke="#3a4250" stroke-width="0.700"/><path d="M734.500 18.500h3l4-4v13l-4-4h-3z" fill="#fff" stroke="#445" stroke-width="0.700"/><path d="M743.500 17.500c1.500 1.500 1.500 5 0 6.500" fill="none" stroke="#fff" stroke-width="1.200"/><ellipse cx="763.500" cy="20" rx="5.600" ry="6.600" fill="none" stroke="#e01828" stroke-width="3.400"/><circle cx="787" cy="20" r="7.500" fill="#2a2a2a"/><circle cx="785.500" cy="19" r="6" fill="#3ca83c"/><path d="M781 17c3-2 6-2 9 0M781 21c3 2 6 2 9 0" stroke="#a8e8a8" stroke-width="1" fill="none"/><circle cx="791" cy="24" r="3.800" fill="#222"/><path d="M789.500 22.500l3 3M792.500 22.500l-3 3" stroke="#fff" stroke-width="1"/><path d="M811.500 13a7 7 0 1 1 -4 12.500l-2.500 2l.5-3.500a7 7 0 0 1 6-11z" fill="#6c68e0" stroke="#eeeafc" stroke-width="1.200"/><path d="M808.500 17c0 3 2.500 5.500 5.500 5.500" stroke="#fff" stroke-width="1.500" fill="none"/><circle cx="817" cy="14.500" r="2.600" fill="#e82020"/><rect x="829.500" y="13.500" width="15" height="15" fill="#9a8088" opacity="0.5"/><rect x="828.500" y="12.500" width="15" height="15" fill="#f8dcdc" stroke="#d8a8a8" stroke-width="1"/><path d="M831.500 15.500l4.500 9.500l4.500-9.500" stroke="#b42424" stroke-width="2.300" fill="none"/><rect x="854" y="13" width="12" height="14" fill="#a8c8e8" stroke="#7898b8" stroke-width="0.600"/><rect x="856" y="15" width="3.600" height="3.600" fill="#e85828"/><rect x="860.400" y="15" width="3.600" height="3.600" fill="#78b828"/><rect x="856" y="19.400" width="3.600" height="3.600" fill="#2888d8"/><rect x="860.400" y="19.400" width="3.600" height="3.600" fill="#f8c018"/><path d="M852.500 22c2-6 8-9 14-6" stroke="#e8a848" stroke-width="1.400" fill="none"/><rect x="877.500" y="13.500" width="7" height="13" rx="1.500" fill="#fff" stroke="#111" stroke-width="1.300"/><path d="M882.500 16h8v4.500c0 2-1.500 3.200-3 3.200h-2c-1.500 0-3-1.200-3-3.200z" fill="#fff" stroke="#111" stroke-width="1.200"/><path d="M884.500 16v-3.500M888.500 16v-3.500" stroke="#111" stroke-width="2.600"/><path d="M884.500 16v-3M888.500 16v-3" stroke="#fff" stroke-width="1"/><path d="M886.500 23.500v4" stroke="#111" stroke-width="2.600"/><path d="M886.500 23v4" stroke="#fff" stroke-width="1"/><path d="M902 13v15" stroke="#fff" stroke-width="1.600"/><path d="M902 13v15" stroke="#334" stroke-width="0.500" transform="translate(-1,0)"/><path d="M903 14c3-1.500 5 1.500 9 0v7c-4 1.500-6-1.500-9 0z" fill="#fff" stroke="#556" stroke-width="0.600"/><circle cx="911" cy="24" r="4" fill="#d82828"/><path d="M909.300 22.300l3.400 3.400M912.700 22.300l-3.400 3.400" stroke="#fff" stroke-width="1.300"/></svg>
<span class="tx" style="left:945.5px;top:735.14px;font-size:12px;line-height:12px;color:#fff;font-weight:normal;letter-spacing:-0.39px;">7:54 PM</span>
<span class="tx" style="left:937px;top:751.64px;font-size:12px;line-height:12px;color:#fff;font-weight:normal;letter-spacing:-0.11px;">19/06/2021</span>
<div style="left:1010px;top:729px;width:14px;height:39px;border:1px solid #a8b8cc;border-right:none;background:linear-gradient(90deg,#7c8ea8,#90a2bc 50%,#7c8ea8);box-shadow:inset 0 0 0 1px rgba(40,50,70,.35)"></div>
</body></html>
